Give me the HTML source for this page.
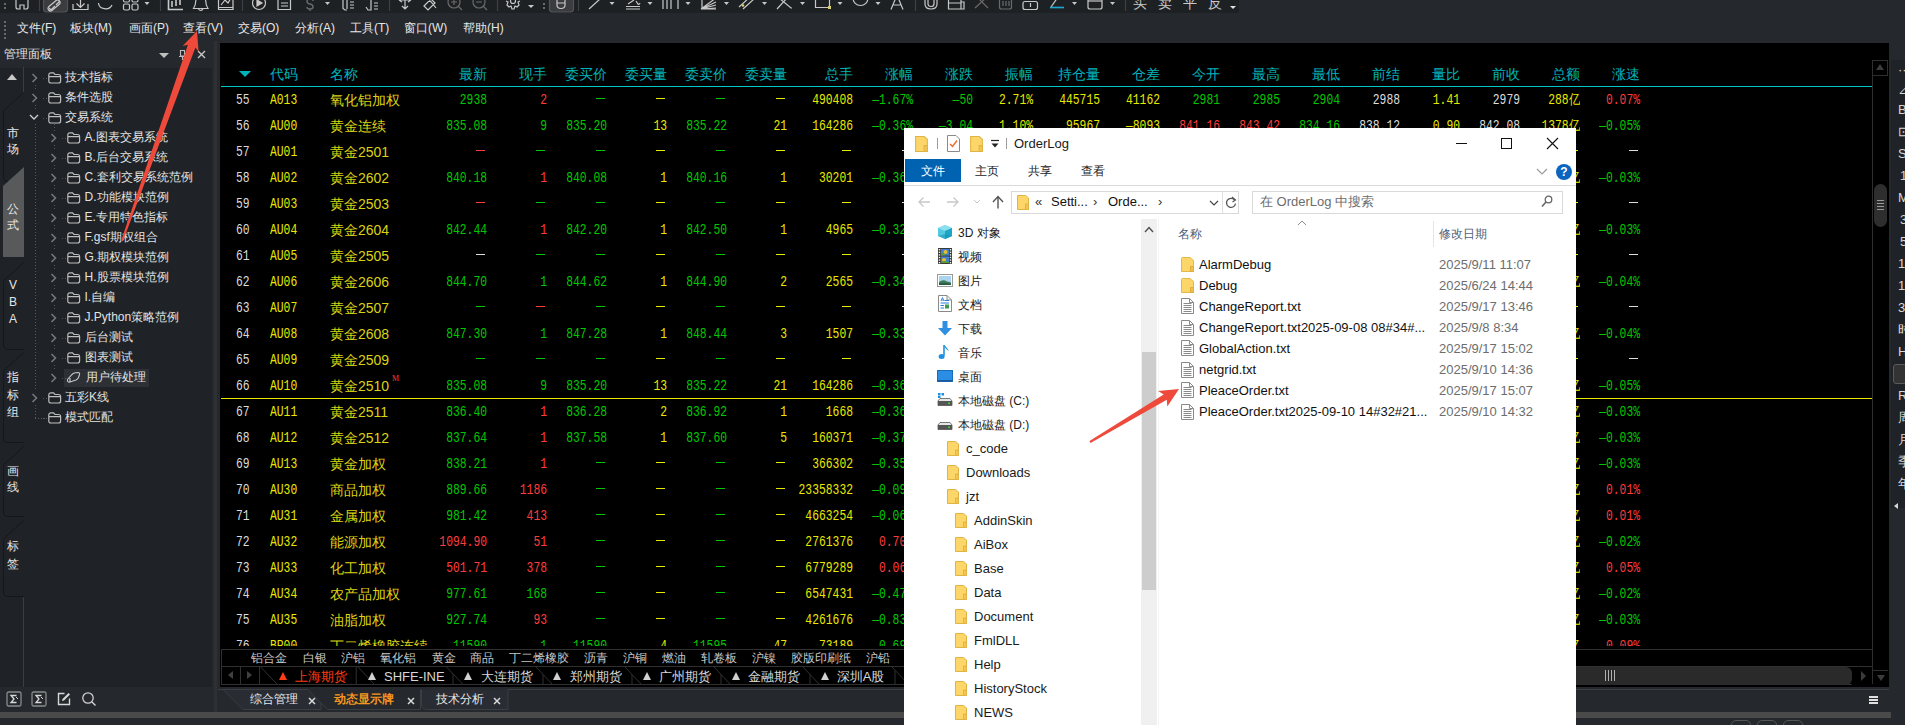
<!DOCTYPE html><html><head><meta charset="utf-8"><style>
*{margin:0;padding:0;box-sizing:border-box}
body{width:1905px;height:725px;overflow:hidden;background:#25282c;font-family:"Liberation Sans",sans-serif;position:relative}
.a{position:absolute}
.t{position:absolute;white-space:nowrap}
.num{position:absolute;white-space:nowrap;font-family:"Liberation Mono",monospace;font-size:14px;line-height:26px;transform:scaleX(0.81);transform-origin:100% 50%;text-align:right}
.hd{position:absolute;white-space:nowrap;font-size:13.5px;line-height:20px;color:#00b4bc;text-align:right}
.dash{position:absolute;height:1px}
svg{overflow:visible}
</style></head><body>
<div class="a" style="left:0;top:0;width:1239px;height:13px;background:#1e2124;border-radius:0 0 3px 0"></div><svg class="a" style="left:0;top:0;overflow:hidden" width="1239" height="13" viewBox="0 0 1239 13" fill="none" stroke="#c8c8c8" stroke-width="1.2"><rect x="4" y="3" width="2" height="2" fill="#6a6a6a" stroke="none"/><rect x="4" y="7" width="2" height="2" fill="#6a6a6a" stroke="none"/><path d="M16 -2 V7 Q16 9 18 9 H20 V5 H24 V9 H26 Q28 9 28 7 V-2"/><path d="M39.5 0 V11" stroke="#3c3f43"/><path d="M160.5 0 V11" stroke="#3c3f43"/><path d="M242.5 0 V11" stroke="#3c3f43"/><path d="M389.5 0 V11" stroke="#3c3f43"/><path d="M497.5 0 V11" stroke="#3c3f43"/><path d="M915.5 0 V11" stroke="#3c3f43"/><path d="M1125.5 0 V11" stroke="#3c3f43"/><rect x="43.5" y="-4" width="24" height="16" rx="3" fill="#3a3c40" stroke="#505357"/><path d="M49 8 L51 10 L55 6 M56 5 L60 1" stroke-width="1.3"/><rect x="47" y="3" width="14" height="5" rx="2.5" transform="rotate(-40 54 5.5)"/><path d="M73 4 V9.5 H88 V4 M80.5 -3 V7 M76.5 3.5 L80.5 7.5 L84.5 3.5"/><path d="M98.5 3 A7 6 0 0 0 112 5 M108 -1 L112 -0.5"/><rect x="123.5" y="-4" width="6" height="6" rx="1.5"/><rect x="132" y="-4" width="6" height="6" rx="1.5"/><rect x="123.5" y="4" width="6" height="6" rx="1.5"/><rect x="132" y="4" width="6" height="6" rx="1.5"/><path d="M144.5 2 H149.5 L147 5 Z" fill="#c8c8c8" stroke="none"/><path d="M325.0 2 H330.0 L327.5 5 Z" fill="#c8c8c8" stroke="none"/><path d="M609.5 2 H614.5 L612 5 Z" fill="#c8c8c8" stroke="none"/><path d="M647.5 2 H652.5 L650 5 Z" fill="#c8c8c8" stroke="none"/><path d="M685.5 2 H690.5 L688 5 Z" fill="#c8c8c8" stroke="none"/><path d="M724.0 2 H729.0 L726.5 5 Z" fill="#c8c8c8" stroke="none"/><path d="M762.0 2 H767.0 L764.5 5 Z" fill="#c8c8c8" stroke="none"/><path d="M800.0 2 H805.0 L802.5 5 Z" fill="#c8c8c8" stroke="none"/><path d="M837.5 2 H842.5 L840 5 Z" fill="#c8c8c8" stroke="none"/><path d="M875.5 2 H880.5 L878 5 Z" fill="#c8c8c8" stroke="none"/><path d="M1072.0 2 H1077.0 L1074.5 5 Z" fill="#c8c8c8" stroke="none"/><path d="M1110.0 2 H1115.0 L1112.5 5 Z" fill="#c8c8c8" stroke="none"/><path d="M168.5 -3 V9.5 H183 M172 1 V7 M176 -2 V6 M180 0 V5" stroke-width="1.6"/><path d="M196 -2 Q196 5 193.5 8.5 H208 Q205.5 5 205.5 -2 M198.5 9 Q200.5 12 203 9"/><path d="M218.5 -3 V9.5 H233 V-3 M218.5 7.5 H233 M221 5 L225 0 L228 3 L231 -2"/><circle cx="259" cy="3" r="6.5"/><path d="M257 0 L262 3 L257 6 Z" fill="#c8c8c8"/><path d="M278 -3 V9.5 H290.5 V-3 M281 3 H288 M281 6 H288"/><path d="M313 1 Q313 -1 310 -1 Q307 -1 307 1.5 Q307 3.5 310 4 Q313 4.5 313 7 Q313 9 310 9 Q307 9 307 7 M310 9 V11" stroke="#6a6a6a" stroke-width="1.4"/><path d="M343 -3 V8.5 L345 10 H347 M347 -2 V9 M350 2 H354 M350 5 H354 M350 8 H354"/><path d="M366 7 L368 10 H371 V-3 M374 3 H378 M374 6 H378 M374 9 H378"/><path d="M399 0 L402 -2 M399 0 L402 2 M411 0 L408 -2 M411 0 L408 2 M399 0 H411 M405 -3 V9 M402 6 L405 9 L408 6"/><path d="M424 6 L431 -1 L435 3 L428 10 Z M428 -2 L436 8"/><circle cx="454" cy="2" r="6" stroke="#6a6a6a"/><path d="M458.5 6.5 L462 10 M451 2 H457 M454 -1 V5" stroke="#6a6a6a"/><circle cx="479" cy="2" r="6" stroke="#6a6a6a"/><path d="M483.5 6.5 L487 10 M476 2 H482" stroke="#6a6a6a"/><path d="M506 1 L508 2 L507 5 L509 7 L511 6 L512 9 H514 L515 6 L517 7 L519 5 L518 2 L520 1"/><circle cx="513" cy="1" r="2.5"/><path d="M528 5 H534 L531 8 Z" fill="#c8c8c8" stroke="none"/><rect x="543" y="3" width="2" height="2" fill="#6a6a6a" stroke="none"/><rect x="543" y="7" width="2" height="2" fill="#6a6a6a" stroke="none"/><rect x="549.5" y="-4" width="24" height="16" rx="3" fill="#3a3c40" stroke="#505357"/><path d="M557 -3 V5 Q557 8.5 561 8.5 Q565 8.5 565 5 V-3 M557 3 H565"/><path d="M578.5 0 V11" stroke="#3c3f43"/><path d="M589 9 L600 -1"/><path d="M626 6.5 H640 M626 9 H640 M628 4 L634 0 M636 1 L638 4 Q639 5 640 3"/><path d="M663 -3 V9 M667 -3 V9 M671 -3 V9 M678 -3 V9"/><path d="M701 9 L716 -2 M701 9 L716 2 M701 9 L716 5 M701 9 L716 8 M701 9 H716 M702 -2 V9"/><path d="M739 7 L750 -3 M743 9 L754 -1" /><circle cx="743" cy="5.5" r="1.3" fill="#d6d06a" stroke="none"/><path d="M777 9 L788 -3 M779 -2 L791 8 H792"/><path d="M815.5 -3 V7.5 H829.5 V-3"/><rect x="828" y="6" width="3" height="3" fill="#d6d06a" stroke="none"/><path d="M853 -2 A7.5 7.5 0 0 0 868 -2"/><path d="M891 9.5 L897 -5 L903 9.5 M893.5 5 H900.5"/><path d="M925 -2 V4 Q925 9 931 9 Q937 9 937 4 V-2 M928 -2 V4 Q928 6.5 931 6.5 Q934 6.5 934 4 V-2"/><path d="M948.5 -3 V9 H961 V-3 M948.5 3 H961 M961 2 H964 V9 H961"/><path d="M975 8 L987 -3 M977 -3 L988 8" stroke="#6a6a6a"/><rect x="999.5" y="-3" width="12" height="12" rx="2" stroke="#6a6a6a"/><path d="M1003 1 V6 M1006 1 V6 M1009 1 V6" stroke="#6a6a6a"/><rect x="1023" y="1.5" width="14.5" height="8" rx="2"/><path d="M1030.5 3 V7"/><path d="M1051 -3 L1058 -3 L1051 7" /><path d="M1050 7.5 H1064" stroke="#1ea8d0" stroke-width="1.6"/><rect x="1088" y="-3" width="14" height="12" rx="2"/><path d="M1088 1 H1102"/></svg><div class="a" style="left:1133px;top:0;width:16px;height:13px;overflow:hidden"><div class="t" style="left:0;top:-6px;font-size:14px;line-height:18px;color:#c8c8c8">买</div></div><div class="a" style="left:1158px;top:0;width:16px;height:13px;overflow:hidden"><div class="t" style="left:0;top:-6px;font-size:14px;line-height:18px;color:#c8c8c8">卖</div></div><div class="a" style="left:1183px;top:0;width:16px;height:13px;overflow:hidden"><div class="t" style="left:0;top:-6px;font-size:14px;line-height:18px;color:#c8c8c8">平</div></div><div class="a" style="left:1208px;top:0;width:16px;height:13px;overflow:hidden"><div class="t" style="left:0;top:-6px;font-size:14px;line-height:18px;color:#c8c8c8">反</div></div><div class="a" style="left:1230px;top:6px;width:0;height:0;border-left:3px solid transparent;border-right:3px solid transparent;border-top:3px solid #e0e0e0"></div><div class="t" style="left:17px;top:19px;font-size:12px;line-height:18px;color:#e6e6e6">文件(F)</div><div class="t" style="left:70px;top:19px;font-size:12px;line-height:18px;color:#e6e6e6">板块(M)</div><div class="t" style="left:129px;top:19px;font-size:12px;line-height:18px;color:#e6e6e6">画面(P)</div><div class="t" style="left:183px;top:19px;font-size:12px;line-height:18px;color:#e6e6e6">查看(V)</div><div class="t" style="left:238px;top:19px;font-size:12px;line-height:18px;color:#e6e6e6">交易(O)</div><div class="t" style="left:295px;top:19px;font-size:12px;line-height:18px;color:#e6e6e6">分析(A)</div><div class="t" style="left:350px;top:19px;font-size:12px;line-height:18px;color:#e6e6e6">工具(T)</div><div class="t" style="left:404px;top:19px;font-size:12px;line-height:18px;color:#e6e6e6">窗口(W)</div><div class="t" style="left:463px;top:19px;font-size:12px;line-height:18px;color:#e6e6e6">帮助(H)</div><div class="a" style="left:4px;top:21px;width:2px;height:2px;background:#6a6a6a"></div><div class="a" style="left:4px;top:25px;width:2px;height:2px;background:#6a6a6a"></div><div class="a" style="left:4px;top:29px;width:2px;height:2px;background:#6a6a6a"></div><div class="a" style="left:4px;top:33px;width:2px;height:2px;background:#6a6a6a"></div><div class="a" style="left:4px;top:37px;width:2px;height:2px;background:#6a6a6a"></div><div class="a" style="left:0;top:68px;width:212px;height:619px;background:#1f2226"></div><div class="t" style="left:4px;top:45px;font-size:12px;line-height:18px;color:#e0e0e0">管理面板</div><div class="a" style="left:159px;top:53px;width:0;height:0;border-left:5px solid transparent;border-right:5px solid transparent;border-top:5px solid #c0c0c0"></div><svg class="a" style="left:178px;top:49px" width="9" height="12" viewBox="0 0 9 12"><path d="M2.5 1.5 H6.5 V7 H2.5 Z M1 7.5 H8 M4.5 8 V11" fill="none" stroke="#bdbdbd" stroke-width="1.1"/></svg><svg class="a" style="left:197px;top:50px" width="9" height="9" viewBox="0 0 9 9"><path d="M1 1 L8 8 M8 1 L1 8" stroke="#c8c8c8" stroke-width="1.4"/></svg><div class="a" style="left:7px;top:74px;width:0;height:0;border-left:5px solid transparent;border-right:5px solid transparent;border-bottom:6px solid #c8c8c8"></div><div class="a" style="left:23px;top:67px;width:1px;height:25px;background:#3a3d41"></div><svg class="a" style="left:0;top:92px" width="26" height="90" viewBox="0 0 26 90"><path d="M23.5 0.5 L3.5 19 V85 Q3.5 89.5 8 89.5 H24" fill="none" stroke="#15171a" stroke-width="1"/></svg><div class="t" style="left:4px;width:18px;text-align:center;top:124px;line-height:18px;font-size:12px;color:#e6e6e6">市</div><div class="t" style="left:4px;width:18px;text-align:center;top:140px;line-height:18px;font-size:12px;color:#e6e6e6">场</div><svg class="a" style="left:0;top:167px" width="26" height="90" viewBox="0 0 26 90"><path d="M3 19 L24 0 V90 H3 Z" fill="#58595b"/></svg><div class="t" style="left:4px;width:18px;text-align:center;top:200px;line-height:18px;font-size:12px;color:#e6e6e6">公</div><div class="t" style="left:4px;width:18px;text-align:center;top:216px;line-height:18px;font-size:12px;color:#e6e6e6">式</div><svg class="a" style="left:0;top:262px" width="26" height="88" viewBox="0 0 26 88"><path d="M23.5 0.5 L3.5 19 V83 Q3.5 87.5 8 87.5 H24" fill="none" stroke="#15171a" stroke-width="1"/></svg><div class="t" style="left:4px;width:18px;text-align:center;top:276px;line-height:18px;font-size:12px;color:#e6e6e6">V</div><div class="t" style="left:4px;width:18px;text-align:center;top:293px;line-height:18px;font-size:12px;color:#e6e6e6">B</div><div class="t" style="left:4px;width:18px;text-align:center;top:310px;line-height:18px;font-size:12px;color:#e6e6e6">A</div><svg class="a" style="left:0;top:352px" width="26" height="91" viewBox="0 0 26 91"><path d="M23.5 0.5 L3.5 19 V86 Q3.5 90.5 8 90.5 H24" fill="none" stroke="#15171a" stroke-width="1"/></svg><div class="t" style="left:4px;width:18px;text-align:center;top:368px;line-height:18px;font-size:12px;color:#e6e6e6">指</div><div class="t" style="left:4px;width:18px;text-align:center;top:386px;line-height:18px;font-size:12px;color:#e6e6e6">标</div><div class="t" style="left:4px;width:18px;text-align:center;top:403px;line-height:18px;font-size:12px;color:#e6e6e6">组</div><svg class="a" style="left:0;top:446px" width="26" height="71" viewBox="0 0 26 71"><path d="M23.5 0.5 L3.5 19 V66 Q3.5 70.5 8 70.5 H24" fill="none" stroke="#15171a" stroke-width="1"/></svg><div class="t" style="left:4px;width:18px;text-align:center;top:462px;line-height:18px;font-size:12px;color:#e6e6e6">画</div><div class="t" style="left:4px;width:18px;text-align:center;top:478px;line-height:18px;font-size:12px;color:#e6e6e6">线</div><svg class="a" style="left:0;top:520px" width="26" height="77" viewBox="0 0 26 77"><path d="M23.5 0.5 L3.5 19 V72 Q3.5 76.5 8 76.5 H24" fill="none" stroke="#15171a" stroke-width="1"/></svg><div class="t" style="left:4px;width:18px;text-align:center;top:537px;line-height:18px;font-size:12px;color:#e6e6e6">标</div><div class="t" style="left:4px;width:18px;text-align:center;top:555px;line-height:18px;font-size:12px;color:#e6e6e6">签</div><div class="a" style="left:23px;top:597px;width:1px;height:90px;background:#3a3d41"></div><div class="a" style="left:35px;top:124px;width:1px;height:265px;background:repeating-linear-gradient(to bottom,#5a5a5a 0 1px,transparent 1px 3px)"></div><div class="a" style="left:35px;top:405px;width:1px;height:14px;background:repeating-linear-gradient(to bottom,#5a5a5a 0 1px,transparent 1px 3px)"></div><div class="a" style="left:35px;top:418px;width:12px;height:1px;background:repeating-linear-gradient(to right,#5a5a5a 0 1px,transparent 1px 3px)"></div><div class="a" style="left:35px;top:85px;width:1px;height:6px;background:repeating-linear-gradient(to bottom,#5a5a5a 0 1px,transparent 1px 3px)"></div><div class="a" style="left:35px;top:105px;width:1px;height:6px;background:repeating-linear-gradient(to bottom,#5a5a5a 0 1px,transparent 1px 3px)"></div><div class="a" style="left:54px;top:145px;width:1px;height:6px;background:repeating-linear-gradient(to bottom,#5a5a5a 0 1px,transparent 1px 3px)"></div><div class="a" style="left:54px;top:165px;width:1px;height:6px;background:repeating-linear-gradient(to bottom,#5a5a5a 0 1px,transparent 1px 3px)"></div><div class="a" style="left:54px;top:185px;width:1px;height:6px;background:repeating-linear-gradient(to bottom,#5a5a5a 0 1px,transparent 1px 3px)"></div><div class="a" style="left:54px;top:205px;width:1px;height:6px;background:repeating-linear-gradient(to bottom,#5a5a5a 0 1px,transparent 1px 3px)"></div><div class="a" style="left:54px;top:225px;width:1px;height:6px;background:repeating-linear-gradient(to bottom,#5a5a5a 0 1px,transparent 1px 3px)"></div><div class="a" style="left:54px;top:245px;width:1px;height:6px;background:repeating-linear-gradient(to bottom,#5a5a5a 0 1px,transparent 1px 3px)"></div><div class="a" style="left:54px;top:265px;width:1px;height:6px;background:repeating-linear-gradient(to bottom,#5a5a5a 0 1px,transparent 1px 3px)"></div><div class="a" style="left:54px;top:285px;width:1px;height:6px;background:repeating-linear-gradient(to bottom,#5a5a5a 0 1px,transparent 1px 3px)"></div><div class="a" style="left:54px;top:305px;width:1px;height:6px;background:repeating-linear-gradient(to bottom,#5a5a5a 0 1px,transparent 1px 3px)"></div><div class="a" style="left:54px;top:325px;width:1px;height:6px;background:repeating-linear-gradient(to bottom,#5a5a5a 0 1px,transparent 1px 3px)"></div><div class="a" style="left:54px;top:345px;width:1px;height:6px;background:repeating-linear-gradient(to bottom,#5a5a5a 0 1px,transparent 1px 3px)"></div><div class="a" style="left:54px;top:365px;width:1px;height:6px;background:repeating-linear-gradient(to bottom,#5a5a5a 0 1px,transparent 1px 3px)"></div><div class="a" style="left:54px;top:124px;width:1px;height:7px;background:repeating-linear-gradient(to bottom,#5a5a5a 0 1px,transparent 1px 3px)"></div><svg class="a" style="left:31px;top:73px" width="8" height="10" viewBox="0 0 8 10"><path d="M1.5 1 L5.5 5 L1.5 9" fill="none" stroke="#777" stroke-width="1.6"/></svg><div class="a" style="left:43px;top:78px;width:4px;height:1px;background:repeating-linear-gradient(to right,#5a5a5a 0 1px,transparent 1px 3px)"></div><svg class="a" style="left:48px;top:72px" width="14" height="12" viewBox="0 0 14 12"><path d="M0.8 9 V3 Q0.8 0.8 3 0.8 H5.5 L7 2.5 H10.5 Q12.6 2.5 12.6 4.5 V9 Q12.6 11 10.5 11 H3 Q0.8 11 0.8 9 Z M0.8 4.6 H12.6" fill="none" stroke="#bdbdbd" stroke-width="1.2"/></svg><div class="t" style="left:65px;top:68px;line-height:18px;font-size:12px;color:#e2e2e2">技术指标</div><svg class="a" style="left:31px;top:93px" width="8" height="10" viewBox="0 0 8 10"><path d="M1.5 1 L5.5 5 L1.5 9" fill="none" stroke="#777" stroke-width="1.6"/></svg><div class="a" style="left:43px;top:98px;width:4px;height:1px;background:repeating-linear-gradient(to right,#5a5a5a 0 1px,transparent 1px 3px)"></div><svg class="a" style="left:48px;top:92px" width="14" height="12" viewBox="0 0 14 12"><path d="M0.8 9 V3 Q0.8 0.8 3 0.8 H5.5 L7 2.5 H10.5 Q12.6 2.5 12.6 4.5 V9 Q12.6 11 10.5 11 H3 Q0.8 11 0.8 9 Z M0.8 4.6 H12.6" fill="none" stroke="#bdbdbd" stroke-width="1.2"/></svg><div class="t" style="left:65px;top:88px;line-height:18px;font-size:12px;color:#e2e2e2">条件选股</div><svg class="a" style="left:29px;top:113px" width="10" height="8" viewBox="0 0 10 8"><path d="M1 2 L5 6 L9 2" fill="none" stroke="#d0d0d0" stroke-width="1.3"/></svg><div class="a" style="left:43px;top:118px;width:4px;height:1px;background:repeating-linear-gradient(to right,#5a5a5a 0 1px,transparent 1px 3px)"></div><svg class="a" style="left:48px;top:112px" width="14" height="12" viewBox="0 0 14 12"><path d="M0.8 9 V3 Q0.8 0.8 3 0.8 H5.5 L7 2.5 H10.5 Q12.6 2.5 12.6 4.5 V9 Q12.6 11 10.5 11 H3 Q0.8 11 0.8 9 Z M0.8 4.6 H12.6" fill="none" stroke="#bdbdbd" stroke-width="1.2"/></svg><div class="t" style="left:65px;top:108px;line-height:18px;font-size:12px;color:#e2e2e2">交易系统</div><svg class="a" style="left:50px;top:133px" width="8" height="10" viewBox="0 0 8 10"><path d="M1.5 1 L5.5 5 L1.5 9" fill="none" stroke="#777" stroke-width="1.6"/></svg><div class="a" style="left:62px;top:138px;width:4px;height:1px;background:repeating-linear-gradient(to right,#5a5a5a 0 1px,transparent 1px 3px)"></div><svg class="a" style="left:67px;top:132px" width="14" height="12" viewBox="0 0 14 12"><path d="M0.8 9 V3 Q0.8 0.8 3 0.8 H5.5 L7 2.5 H10.5 Q12.6 2.5 12.6 4.5 V9 Q12.6 11 10.5 11 H3 Q0.8 11 0.8 9 Z M0.8 4.6 H12.6" fill="none" stroke="#bdbdbd" stroke-width="1.2"/></svg><div class="t" style="left:84.5px;top:128px;line-height:18px;font-size:12px;color:#e2e2e2">A.图表交易系统</div><svg class="a" style="left:50px;top:153px" width="8" height="10" viewBox="0 0 8 10"><path d="M1.5 1 L5.5 5 L1.5 9" fill="none" stroke="#777" stroke-width="1.6"/></svg><div class="a" style="left:62px;top:158px;width:4px;height:1px;background:repeating-linear-gradient(to right,#5a5a5a 0 1px,transparent 1px 3px)"></div><svg class="a" style="left:67px;top:152px" width="14" height="12" viewBox="0 0 14 12"><path d="M0.8 9 V3 Q0.8 0.8 3 0.8 H5.5 L7 2.5 H10.5 Q12.6 2.5 12.6 4.5 V9 Q12.6 11 10.5 11 H3 Q0.8 11 0.8 9 Z M0.8 4.6 H12.6" fill="none" stroke="#bdbdbd" stroke-width="1.2"/></svg><div class="t" style="left:84.5px;top:148px;line-height:18px;font-size:12px;color:#e2e2e2">B.后台交易系统</div><svg class="a" style="left:50px;top:173px" width="8" height="10" viewBox="0 0 8 10"><path d="M1.5 1 L5.5 5 L1.5 9" fill="none" stroke="#777" stroke-width="1.6"/></svg><div class="a" style="left:62px;top:178px;width:4px;height:1px;background:repeating-linear-gradient(to right,#5a5a5a 0 1px,transparent 1px 3px)"></div><svg class="a" style="left:67px;top:172px" width="14" height="12" viewBox="0 0 14 12"><path d="M0.8 9 V3 Q0.8 0.8 3 0.8 H5.5 L7 2.5 H10.5 Q12.6 2.5 12.6 4.5 V9 Q12.6 11 10.5 11 H3 Q0.8 11 0.8 9 Z M0.8 4.6 H12.6" fill="none" stroke="#bdbdbd" stroke-width="1.2"/></svg><div class="t" style="left:84.5px;top:168px;line-height:18px;font-size:12px;color:#e2e2e2">C.套利交易系统范例</div><svg class="a" style="left:50px;top:193px" width="8" height="10" viewBox="0 0 8 10"><path d="M1.5 1 L5.5 5 L1.5 9" fill="none" stroke="#777" stroke-width="1.6"/></svg><div class="a" style="left:62px;top:198px;width:4px;height:1px;background:repeating-linear-gradient(to right,#5a5a5a 0 1px,transparent 1px 3px)"></div><svg class="a" style="left:67px;top:192px" width="14" height="12" viewBox="0 0 14 12"><path d="M0.8 9 V3 Q0.8 0.8 3 0.8 H5.5 L7 2.5 H10.5 Q12.6 2.5 12.6 4.5 V9 Q12.6 11 10.5 11 H3 Q0.8 11 0.8 9 Z M0.8 4.6 H12.6" fill="none" stroke="#bdbdbd" stroke-width="1.2"/></svg><div class="t" style="left:84.5px;top:188px;line-height:18px;font-size:12px;color:#e2e2e2">D.功能模块范例</div><svg class="a" style="left:50px;top:213px" width="8" height="10" viewBox="0 0 8 10"><path d="M1.5 1 L5.5 5 L1.5 9" fill="none" stroke="#777" stroke-width="1.6"/></svg><div class="a" style="left:62px;top:218px;width:4px;height:1px;background:repeating-linear-gradient(to right,#5a5a5a 0 1px,transparent 1px 3px)"></div><svg class="a" style="left:67px;top:212px" width="14" height="12" viewBox="0 0 14 12"><path d="M0.8 9 V3 Q0.8 0.8 3 0.8 H5.5 L7 2.5 H10.5 Q12.6 2.5 12.6 4.5 V9 Q12.6 11 10.5 11 H3 Q0.8 11 0.8 9 Z M0.8 4.6 H12.6" fill="none" stroke="#bdbdbd" stroke-width="1.2"/></svg><div class="t" style="left:84.5px;top:208px;line-height:18px;font-size:12px;color:#e2e2e2">E.专用特色指标</div><svg class="a" style="left:50px;top:233px" width="8" height="10" viewBox="0 0 8 10"><path d="M1.5 1 L5.5 5 L1.5 9" fill="none" stroke="#777" stroke-width="1.6"/></svg><div class="a" style="left:62px;top:238px;width:4px;height:1px;background:repeating-linear-gradient(to right,#5a5a5a 0 1px,transparent 1px 3px)"></div><svg class="a" style="left:67px;top:232px" width="14" height="12" viewBox="0 0 14 12"><path d="M0.8 9 V3 Q0.8 0.8 3 0.8 H5.5 L7 2.5 H10.5 Q12.6 2.5 12.6 4.5 V9 Q12.6 11 10.5 11 H3 Q0.8 11 0.8 9 Z M0.8 4.6 H12.6" fill="none" stroke="#bdbdbd" stroke-width="1.2"/></svg><div class="t" style="left:84.5px;top:228px;line-height:18px;font-size:12px;color:#e2e2e2">F.gsf期权组合</div><svg class="a" style="left:50px;top:253px" width="8" height="10" viewBox="0 0 8 10"><path d="M1.5 1 L5.5 5 L1.5 9" fill="none" stroke="#777" stroke-width="1.6"/></svg><div class="a" style="left:62px;top:258px;width:4px;height:1px;background:repeating-linear-gradient(to right,#5a5a5a 0 1px,transparent 1px 3px)"></div><svg class="a" style="left:67px;top:252px" width="14" height="12" viewBox="0 0 14 12"><path d="M0.8 9 V3 Q0.8 0.8 3 0.8 H5.5 L7 2.5 H10.5 Q12.6 2.5 12.6 4.5 V9 Q12.6 11 10.5 11 H3 Q0.8 11 0.8 9 Z M0.8 4.6 H12.6" fill="none" stroke="#bdbdbd" stroke-width="1.2"/></svg><div class="t" style="left:84.5px;top:248px;line-height:18px;font-size:12px;color:#e2e2e2">G.期权模块范例</div><svg class="a" style="left:50px;top:273px" width="8" height="10" viewBox="0 0 8 10"><path d="M1.5 1 L5.5 5 L1.5 9" fill="none" stroke="#777" stroke-width="1.6"/></svg><div class="a" style="left:62px;top:278px;width:4px;height:1px;background:repeating-linear-gradient(to right,#5a5a5a 0 1px,transparent 1px 3px)"></div><svg class="a" style="left:67px;top:272px" width="14" height="12" viewBox="0 0 14 12"><path d="M0.8 9 V3 Q0.8 0.8 3 0.8 H5.5 L7 2.5 H10.5 Q12.6 2.5 12.6 4.5 V9 Q12.6 11 10.5 11 H3 Q0.8 11 0.8 9 Z M0.8 4.6 H12.6" fill="none" stroke="#bdbdbd" stroke-width="1.2"/></svg><div class="t" style="left:84.5px;top:268px;line-height:18px;font-size:12px;color:#e2e2e2">H.股票模块范例</div><svg class="a" style="left:50px;top:293px" width="8" height="10" viewBox="0 0 8 10"><path d="M1.5 1 L5.5 5 L1.5 9" fill="none" stroke="#777" stroke-width="1.6"/></svg><div class="a" style="left:62px;top:298px;width:4px;height:1px;background:repeating-linear-gradient(to right,#5a5a5a 0 1px,transparent 1px 3px)"></div><svg class="a" style="left:67px;top:292px" width="14" height="12" viewBox="0 0 14 12"><path d="M0.8 9 V3 Q0.8 0.8 3 0.8 H5.5 L7 2.5 H10.5 Q12.6 2.5 12.6 4.5 V9 Q12.6 11 10.5 11 H3 Q0.8 11 0.8 9 Z M0.8 4.6 H12.6" fill="none" stroke="#bdbdbd" stroke-width="1.2"/></svg><div class="t" style="left:84.5px;top:288px;line-height:18px;font-size:12px;color:#e2e2e2">I.自编</div><svg class="a" style="left:50px;top:313px" width="8" height="10" viewBox="0 0 8 10"><path d="M1.5 1 L5.5 5 L1.5 9" fill="none" stroke="#777" stroke-width="1.6"/></svg><div class="a" style="left:62px;top:318px;width:4px;height:1px;background:repeating-linear-gradient(to right,#5a5a5a 0 1px,transparent 1px 3px)"></div><svg class="a" style="left:67px;top:312px" width="14" height="12" viewBox="0 0 14 12"><path d="M0.8 9 V3 Q0.8 0.8 3 0.8 H5.5 L7 2.5 H10.5 Q12.6 2.5 12.6 4.5 V9 Q12.6 11 10.5 11 H3 Q0.8 11 0.8 9 Z M0.8 4.6 H12.6" fill="none" stroke="#bdbdbd" stroke-width="1.2"/></svg><div class="t" style="left:84.5px;top:308px;line-height:18px;font-size:12px;color:#e2e2e2">J.Python策略范例</div><svg class="a" style="left:50px;top:333px" width="8" height="10" viewBox="0 0 8 10"><path d="M1.5 1 L5.5 5 L1.5 9" fill="none" stroke="#777" stroke-width="1.6"/></svg><div class="a" style="left:62px;top:338px;width:4px;height:1px;background:repeating-linear-gradient(to right,#5a5a5a 0 1px,transparent 1px 3px)"></div><svg class="a" style="left:67px;top:332px" width="14" height="12" viewBox="0 0 14 12"><path d="M0.8 9 V3 Q0.8 0.8 3 0.8 H5.5 L7 2.5 H10.5 Q12.6 2.5 12.6 4.5 V9 Q12.6 11 10.5 11 H3 Q0.8 11 0.8 9 Z M0.8 4.6 H12.6" fill="none" stroke="#bdbdbd" stroke-width="1.2"/></svg><div class="t" style="left:84.5px;top:328px;line-height:18px;font-size:12px;color:#e2e2e2">后台测试</div><svg class="a" style="left:50px;top:353px" width="8" height="10" viewBox="0 0 8 10"><path d="M1.5 1 L5.5 5 L1.5 9" fill="none" stroke="#777" stroke-width="1.6"/></svg><div class="a" style="left:62px;top:358px;width:4px;height:1px;background:repeating-linear-gradient(to right,#5a5a5a 0 1px,transparent 1px 3px)"></div><svg class="a" style="left:67px;top:352px" width="14" height="12" viewBox="0 0 14 12"><path d="M0.8 9 V3 Q0.8 0.8 3 0.8 H5.5 L7 2.5 H10.5 Q12.6 2.5 12.6 4.5 V9 Q12.6 11 10.5 11 H3 Q0.8 11 0.8 9 Z M0.8 4.6 H12.6" fill="none" stroke="#bdbdbd" stroke-width="1.2"/></svg><div class="t" style="left:84.5px;top:348px;line-height:18px;font-size:12px;color:#e2e2e2">图表测试</div><div class="a" style="left:64px;top:369px;width:85px;height:18px;background:#2d3034"></div><svg class="a" style="left:50px;top:373px" width="8" height="10" viewBox="0 0 8 10"><path d="M1.5 1 L5.5 5 L1.5 9" fill="none" stroke="#777" stroke-width="1.6"/></svg><div class="a" style="left:62px;top:378px;width:4px;height:1px;background:repeating-linear-gradient(to right,#5a5a5a 0 1px,transparent 1px 3px)"></div><svg class="a" style="left:66px;top:371px" width="15" height="12" viewBox="0 0 15 12"><path d="M1.5 8.5 L6 3.5 Q7.5 2 9.5 1.8 L12 1.5 Q14 1.5 13.5 3.5 L12.5 6.5 Q12 8 10 9 L4 11 Q1.5 11.5 1.5 9.5 Z M4 11 V7" fill="none" stroke="#c8c8c8" stroke-width="1.1"/></svg><div class="t" style="left:86px;top:368px;line-height:18px;font-size:12px;color:#e2e2e2">用户待处理</div><svg class="a" style="left:31px;top:393px" width="8" height="10" viewBox="0 0 8 10"><path d="M1.5 1 L5.5 5 L1.5 9" fill="none" stroke="#777" stroke-width="1.6"/></svg><div class="a" style="left:43px;top:398px;width:4px;height:1px;background:repeating-linear-gradient(to right,#5a5a5a 0 1px,transparent 1px 3px)"></div><svg class="a" style="left:48px;top:392px" width="14" height="12" viewBox="0 0 14 12"><path d="M0.8 9 V3 Q0.8 0.8 3 0.8 H5.5 L7 2.5 H10.5 Q12.6 2.5 12.6 4.5 V9 Q12.6 11 10.5 11 H3 Q0.8 11 0.8 9 Z M0.8 4.6 H12.6" fill="none" stroke="#bdbdbd" stroke-width="1.2"/></svg><div class="t" style="left:65px;top:388px;line-height:18px;font-size:12px;color:#e2e2e2">五彩K线</div><div class="a" style="left:43px;top:418px;width:4px;height:1px;background:repeating-linear-gradient(to right,#5a5a5a 0 1px,transparent 1px 3px)"></div><svg class="a" style="left:48px;top:412px" width="14" height="12" viewBox="0 0 14 12"><path d="M0.8 9 V3 Q0.8 0.8 3 0.8 H5.5 L7 2.5 H10.5 Q12.6 2.5 12.6 4.5 V9 Q12.6 11 10.5 11 H3 Q0.8 11 0.8 9 Z M0.8 4.6 H12.6" fill="none" stroke="#bdbdbd" stroke-width="1.2"/></svg><div class="t" style="left:65px;top:408px;line-height:18px;font-size:12px;color:#e2e2e2">模式匹配</div><svg class="a" style="left:6px;top:691px" width="16" height="16" viewBox="0 0 16 16"><rect x="1" y="1" width="14" height="14" fill="none" stroke="#8a8a8a" stroke-width="1.3" rx="1.5"/><path d="M10.5 4.5 H5 L8 8 L5 11.5 H10.5" fill="none" stroke="#d8d8d8" stroke-width="1.3"/><path d="M10 6 L12 8" stroke="#d8d8d8" stroke-width="1"/></svg><svg class="a" style="left:31px;top:691px" width="16" height="16" viewBox="0 0 16 16"><rect x="1" y="1" width="14" height="14" fill="none" stroke="#8a8a8a" stroke-width="1.3" rx="1.5"/><path d="M10.5 4.5 H5 L8 8 L5 11.5 H10.5" fill="none" stroke="#d8d8d8" stroke-width="1.3"/><path d="M10 6 L12 8" stroke="#d8d8d8" stroke-width="1"/></svg><svg class="a" style="left:56px;top:691px" width="16" height="16" viewBox="0 0 16 16"><path d="M8.5 2.5 H2.5 V13.5 H13.5 V7.5" fill="none" stroke="#d8d8d8" stroke-width="1.4"/><path d="M6 10 L6.5 8 L12.5 2 L14 3.5 L8 9.5 Z" fill="#d8d8d8"/></svg><svg class="a" style="left:81px;top:691px" width="16" height="16" viewBox="0 0 16 16"><circle cx="7" cy="7" r="5.2" fill="none" stroke="#d0d0d0" stroke-width="1.3"/><path d="M11 11 L14.5 14.5" stroke="#d0d0d0" stroke-width="1.4"/></svg><div class="a" style="left:214px;top:41px;width:3px;height:671px;background:#2e3033"></div><div class="a" style="left:220px;top:43px;width:1669px;height:644px;background:#000;overflow:hidden"><div class="a" style="left:0;top:0;width:1669px;height:603px;overflow:hidden"><div class="a" style="left:19px;top:28px;width:0;height:0;border-left:6px solid transparent;border-right:6px solid transparent;border-top:6px solid #00b4bc"></div><div class="hd" style="left:50px;top:22px;text-align:left">代码</div><div class="hd" style="left:110px;top:22px;text-align:left">名称</div><div class="hd" style="left:66.5px;width:200px;top:22px">最新</div><div class="hd" style="left:126.5px;width:200px;top:22px">现手</div><div class="hd" style="left:186.5px;width:200px;top:22px">委买价</div><div class="hd" style="left:246.5px;width:200px;top:22px">委买量</div><div class="hd" style="left:306.5px;width:200px;top:22px">委卖价</div><div class="hd" style="left:366.5px;width:200px;top:22px">委卖量</div><div class="hd" style="left:432.5px;width:200px;top:22px">总手</div><div class="hd" style="left:492.5px;width:200px;top:22px">涨幅</div><div class="hd" style="left:552.5px;width:200px;top:22px">涨跌</div><div class="hd" style="left:612.5px;width:200px;top:22px">振幅</div><div class="hd" style="left:679.5px;width:200px;top:22px">持仓量</div><div class="hd" style="left:739.5px;width:200px;top:22px">仓差</div><div class="hd" style="left:799.5px;width:200px;top:22px">今开</div><div class="hd" style="left:859.5px;width:200px;top:22px">最高</div><div class="hd" style="left:919.5px;width:200px;top:22px">最低</div><div class="hd" style="left:979.5px;width:200px;top:22px">前结</div><div class="hd" style="left:1039.5px;width:200px;top:22px">量比</div><div class="hd" style="left:1099.5px;width:200px;top:22px">前收</div><div class="hd" style="left:1160px;width:200px;top:22px">总额</div><div class="hd" style="left:1219.5px;width:200px;top:22px">涨速</div><div class="a" style="left:1px;top:43px;width:1651px;height:1px;background:#00c8c8"></div><div class="num" style="left:16px;top:43.5px;color:#dcdcdc;transform-origin:0 50%;text-align:left">55</div><div class="num" style="left:50px;top:43.5px;color:#e8e800;transform-origin:0 50%;text-align:left">A013</div><div class="t" style="left:110px;top:43.5px;line-height:26px;font-size:14px;color:#dcd214">氧化铝加权</div><div class="num" style="left:66.5px;width:200px;top:43.5px;color:#00c800">2938</div><div class="num" style="left:126.5px;width:200px;top:43.5px;color:#ff3c3c">2</div><div class="dash" style="left:375.5px;top:55px;width:9px;background:#00c800"></div><div class="dash" style="left:435.5px;top:55px;width:9px;background:#e8e800"></div><div class="dash" style="left:495.5px;top:55px;width:9px;background:#00c800"></div><div class="dash" style="left:555.5px;top:55px;width:9px;background:#e8e800"></div><div class="num" style="left:432.5px;width:200px;top:43.5px;color:#e8e800">490408</div><div class="num" style="left:492.5px;width:200px;top:43.5px;color:#00c800">—1.67%</div><div class="num" style="left:552.5px;width:200px;top:43.5px;color:#00c800">—50</div><div class="num" style="left:612.5px;width:200px;top:43.5px;color:#e8e800">2.71%</div><div class="num" style="left:679.5px;width:200px;top:43.5px;color:#e8e800">445715</div><div class="num" style="left:739.5px;width:200px;top:43.5px;color:#e8e800">41162</div><div class="num" style="left:799.5px;width:200px;top:43.5px;color:#00c800">2981</div><div class="num" style="left:859.5px;width:200px;top:43.5px;color:#00c800">2985</div><div class="num" style="left:919.5px;width:200px;top:43.5px;color:#00c800">2904</div><div class="num" style="left:979.5px;width:200px;top:43.5px;color:#dcdcdc">2988</div><div class="num" style="left:1039.5px;width:200px;top:43.5px;color:#e8e800">1.41</div><div class="num" style="left:1099.5px;width:200px;top:43.5px;color:#dcdcdc">2979</div><div class="num" style="left:1160px;width:200px;top:43.5px;color:#e8e800">288亿</div><div class="num" style="left:1219.5px;width:200px;top:43.5px;color:#ff3c3c">0.07%</div><div class="num" style="left:16px;top:69.5px;color:#dcdcdc;transform-origin:0 50%;text-align:left">56</div><div class="num" style="left:50px;top:69.5px;color:#e8e800;transform-origin:0 50%;text-align:left">AU00</div><div class="t" style="left:110px;top:69.5px;line-height:26px;font-size:14px;color:#dcd214">黄金连续</div><div class="num" style="left:66.5px;width:200px;top:69.5px;color:#00c800">835.08</div><div class="num" style="left:126.5px;width:200px;top:69.5px;color:#00c800">9</div><div class="num" style="left:186.5px;width:200px;top:69.5px;color:#00c800">835.20</div><div class="num" style="left:246.5px;width:200px;top:69.5px;color:#e8e800">13</div><div class="num" style="left:306.5px;width:200px;top:69.5px;color:#00c800">835.22</div><div class="num" style="left:366.5px;width:200px;top:69.5px;color:#e8e800">21</div><div class="num" style="left:432.5px;width:200px;top:69.5px;color:#e8e800">164286</div><div class="num" style="left:492.5px;width:200px;top:69.5px;color:#00c800">—0.36%</div><div class="num" style="left:552.5px;width:200px;top:69.5px;color:#00c800">—3.04</div><div class="num" style="left:612.5px;width:200px;top:69.5px;color:#e8e800">1.10%</div><div class="num" style="left:679.5px;width:200px;top:69.5px;color:#e8e800">95967</div><div class="num" style="left:739.5px;width:200px;top:69.5px;color:#e8e800">—8093</div><div class="num" style="left:799.5px;width:200px;top:69.5px;color:#ff3c3c">841.16</div><div class="num" style="left:859.5px;width:200px;top:69.5px;color:#ff3c3c">843.42</div><div class="num" style="left:919.5px;width:200px;top:69.5px;color:#00c800">834.16</div><div class="num" style="left:979.5px;width:200px;top:69.5px;color:#dcdcdc">838.12</div><div class="num" style="left:1039.5px;width:200px;top:69.5px;color:#e8e800">0.90</div><div class="num" style="left:1099.5px;width:200px;top:69.5px;color:#dcdcdc">842.08</div><div class="num" style="left:1160px;width:200px;top:69.5px;color:#e8e800">1378亿</div><div class="num" style="left:1219.5px;width:200px;top:69.5px;color:#00c800">—0.05%</div><div class="num" style="left:16px;top:95.5px;color:#dcdcdc;transform-origin:0 50%;text-align:left">57</div><div class="num" style="left:50px;top:95.5px;color:#e8e800;transform-origin:0 50%;text-align:left">AU01</div><div class="t" style="left:110px;top:95.5px;line-height:26px;font-size:14px;color:#dcd214">黄金2501</div><div class="dash" style="left:255.5px;top:107px;width:9px;background:#ff3c3c"></div><div class="dash" style="left:315.5px;top:107px;width:9px;background:#00c800"></div><div class="dash" style="left:375.5px;top:107px;width:9px;background:#00c800"></div><div class="dash" style="left:435.5px;top:107px;width:9px;background:#e8e800"></div><div class="dash" style="left:495.5px;top:107px;width:9px;background:#00c800"></div><div class="dash" style="left:555.5px;top:107px;width:9px;background:#e8e800"></div><div class="dash" style="left:621.5px;top:107px;width:9px;background:#e8e800"></div><div class="dash" style="left:681.5px;top:107px;width:9px;background:#dcdcdc"></div><div class="dash" style="left:741.5px;top:107px;width:9px;background:#dcdcdc"></div><div class="dash" style="left:801.5px;top:107px;width:9px;background:#e8e800"></div><div class="dash" style="left:868.5px;top:107px;width:9px;background:#e8e800"></div><div class="dash" style="left:928.5px;top:107px;width:9px;background:#e8e800"></div><div class="dash" style="left:988.5px;top:107px;width:9px;background:#dcdcdc"></div><div class="dash" style="left:1048.5px;top:107px;width:9px;background:#dcdcdc"></div><div class="dash" style="left:1108.5px;top:107px;width:9px;background:#dcdcdc"></div><div class="dash" style="left:1168.5px;top:107px;width:9px;background:#dcdcdc"></div><div class="dash" style="left:1228.5px;top:107px;width:9px;background:#e8e800"></div><div class="dash" style="left:1288.5px;top:107px;width:9px;background:#dcdcdc"></div><div class="dash" style="left:1349px;top:107px;width:9px;background:#e8e800"></div><div class="dash" style="left:1408.5px;top:107px;width:9px;background:#dcdcdc"></div><div class="num" style="left:16px;top:121.5px;color:#dcdcdc;transform-origin:0 50%;text-align:left">58</div><div class="num" style="left:50px;top:121.5px;color:#e8e800;transform-origin:0 50%;text-align:left">AU02</div><div class="t" style="left:110px;top:121.5px;line-height:26px;font-size:14px;color:#dcd214">黄金2602</div><div class="num" style="left:66.5px;width:200px;top:121.5px;color:#00c800">840.18</div><div class="num" style="left:126.5px;width:200px;top:121.5px;color:#ff3c3c">1</div><div class="num" style="left:186.5px;width:200px;top:121.5px;color:#00c800">840.08</div><div class="num" style="left:246.5px;width:200px;top:121.5px;color:#e8e800">1</div><div class="num" style="left:306.5px;width:200px;top:121.5px;color:#00c800">840.16</div><div class="num" style="left:366.5px;width:200px;top:121.5px;color:#e8e800">1</div><div class="num" style="left:432.5px;width:200px;top:121.5px;color:#e8e800">30201</div><div class="num" style="left:492.5px;width:200px;top:121.5px;color:#00c800">—0.36%</div><div class="num" style="left:552.5px;width:200px;top:121.5px;color:#00c800">—3.04</div><div class="num" style="left:612.5px;width:200px;top:121.5px;color:#e8e800">1.10%</div><div class="num" style="left:679.5px;width:200px;top:121.5px;color:#e8e800">1</div><div class="num" style="left:739.5px;width:200px;top:121.5px;color:#e8e800">1</div><div class="num" style="left:799.5px;width:200px;top:121.5px;color:#00c800">1</div><div class="num" style="left:859.5px;width:200px;top:121.5px;color:#00c800">1</div><div class="num" style="left:919.5px;width:200px;top:121.5px;color:#00c800">1</div><div class="num" style="left:979.5px;width:200px;top:121.5px;color:#dcdcdc">1</div><div class="num" style="left:1039.5px;width:200px;top:121.5px;color:#e8e800">1</div><div class="num" style="left:1099.5px;width:200px;top:121.5px;color:#dcdcdc">1</div><div class="num" style="left:1160px;width:200px;top:121.5px;color:#e8e800">2亿</div><div class="num" style="left:1219.5px;width:200px;top:121.5px;color:#00c800">—0.03%</div><div class="num" style="left:16px;top:147.5px;color:#dcdcdc;transform-origin:0 50%;text-align:left">59</div><div class="num" style="left:50px;top:147.5px;color:#e8e800;transform-origin:0 50%;text-align:left">AU03</div><div class="t" style="left:110px;top:147.5px;line-height:26px;font-size:14px;color:#dcd214">黄金2503</div><div class="dash" style="left:255.5px;top:159px;width:9px;background:#ff3c3c"></div><div class="dash" style="left:315.5px;top:159px;width:9px;background:#00c800"></div><div class="dash" style="left:375.5px;top:159px;width:9px;background:#00c800"></div><div class="dash" style="left:435.5px;top:159px;width:9px;background:#e8e800"></div><div class="dash" style="left:495.5px;top:159px;width:9px;background:#00c800"></div><div class="dash" style="left:555.5px;top:159px;width:9px;background:#e8e800"></div><div class="dash" style="left:621.5px;top:159px;width:9px;background:#e8e800"></div><div class="dash" style="left:681.5px;top:159px;width:9px;background:#dcdcdc"></div><div class="dash" style="left:741.5px;top:159px;width:9px;background:#dcdcdc"></div><div class="dash" style="left:801.5px;top:159px;width:9px;background:#e8e800"></div><div class="dash" style="left:868.5px;top:159px;width:9px;background:#e8e800"></div><div class="dash" style="left:928.5px;top:159px;width:9px;background:#e8e800"></div><div class="dash" style="left:988.5px;top:159px;width:9px;background:#dcdcdc"></div><div class="dash" style="left:1048.5px;top:159px;width:9px;background:#dcdcdc"></div><div class="dash" style="left:1108.5px;top:159px;width:9px;background:#dcdcdc"></div><div class="dash" style="left:1168.5px;top:159px;width:9px;background:#dcdcdc"></div><div class="dash" style="left:1228.5px;top:159px;width:9px;background:#e8e800"></div><div class="dash" style="left:1288.5px;top:159px;width:9px;background:#dcdcdc"></div><div class="dash" style="left:1349px;top:159px;width:9px;background:#e8e800"></div><div class="dash" style="left:1408.5px;top:159px;width:9px;background:#dcdcdc"></div><div class="num" style="left:16px;top:173.5px;color:#dcdcdc;transform-origin:0 50%;text-align:left">60</div><div class="num" style="left:50px;top:173.5px;color:#e8e800;transform-origin:0 50%;text-align:left">AU04</div><div class="t" style="left:110px;top:173.5px;line-height:26px;font-size:14px;color:#dcd214">黄金2604</div><div class="num" style="left:66.5px;width:200px;top:173.5px;color:#00c800">842.44</div><div class="num" style="left:126.5px;width:200px;top:173.5px;color:#ff3c3c">1</div><div class="num" style="left:186.5px;width:200px;top:173.5px;color:#00c800">842.20</div><div class="num" style="left:246.5px;width:200px;top:173.5px;color:#e8e800">1</div><div class="num" style="left:306.5px;width:200px;top:173.5px;color:#00c800">842.50</div><div class="num" style="left:366.5px;width:200px;top:173.5px;color:#e8e800">1</div><div class="num" style="left:432.5px;width:200px;top:173.5px;color:#e8e800">4965</div><div class="num" style="left:492.5px;width:200px;top:173.5px;color:#00c800">—0.32%</div><div class="num" style="left:552.5px;width:200px;top:173.5px;color:#00c800">—3.04</div><div class="num" style="left:612.5px;width:200px;top:173.5px;color:#e8e800">1.10%</div><div class="num" style="left:679.5px;width:200px;top:173.5px;color:#e8e800">1</div><div class="num" style="left:739.5px;width:200px;top:173.5px;color:#e8e800">1</div><div class="num" style="left:799.5px;width:200px;top:173.5px;color:#00c800">1</div><div class="num" style="left:859.5px;width:200px;top:173.5px;color:#00c800">1</div><div class="num" style="left:919.5px;width:200px;top:173.5px;color:#00c800">1</div><div class="num" style="left:979.5px;width:200px;top:173.5px;color:#dcdcdc">1</div><div class="num" style="left:1039.5px;width:200px;top:173.5px;color:#e8e800">1</div><div class="num" style="left:1099.5px;width:200px;top:173.5px;color:#dcdcdc">1</div><div class="num" style="left:1160px;width:200px;top:173.5px;color:#e8e800">2亿</div><div class="num" style="left:1219.5px;width:200px;top:173.5px;color:#00c800">—0.03%</div><div class="num" style="left:16px;top:199.5px;color:#dcdcdc;transform-origin:0 50%;text-align:left">61</div><div class="num" style="left:50px;top:199.5px;color:#e8e800;transform-origin:0 50%;text-align:left">AU05</div><div class="t" style="left:110px;top:199.5px;line-height:26px;font-size:14px;color:#dcd214">黄金2505</div><div class="dash" style="left:255.5px;top:211px;width:9px;background:#dcdcdc"></div><div class="dash" style="left:315.5px;top:211px;width:9px;background:#00c800"></div><div class="dash" style="left:375.5px;top:211px;width:9px;background:#00c800"></div><div class="dash" style="left:435.5px;top:211px;width:9px;background:#e8e800"></div><div class="dash" style="left:495.5px;top:211px;width:9px;background:#00c800"></div><div class="dash" style="left:555.5px;top:211px;width:9px;background:#e8e800"></div><div class="dash" style="left:621.5px;top:211px;width:9px;background:#e8e800"></div><div class="dash" style="left:681.5px;top:211px;width:9px;background:#dcdcdc"></div><div class="dash" style="left:741.5px;top:211px;width:9px;background:#dcdcdc"></div><div class="dash" style="left:801.5px;top:211px;width:9px;background:#e8e800"></div><div class="dash" style="left:868.5px;top:211px;width:9px;background:#e8e800"></div><div class="dash" style="left:928.5px;top:211px;width:9px;background:#e8e800"></div><div class="dash" style="left:988.5px;top:211px;width:9px;background:#dcdcdc"></div><div class="dash" style="left:1048.5px;top:211px;width:9px;background:#dcdcdc"></div><div class="dash" style="left:1108.5px;top:211px;width:9px;background:#dcdcdc"></div><div class="dash" style="left:1168.5px;top:211px;width:9px;background:#dcdcdc"></div><div class="dash" style="left:1228.5px;top:211px;width:9px;background:#e8e800"></div><div class="dash" style="left:1288.5px;top:211px;width:9px;background:#dcdcdc"></div><div class="dash" style="left:1349px;top:211px;width:9px;background:#e8e800"></div><div class="dash" style="left:1408.5px;top:211px;width:9px;background:#dcdcdc"></div><div class="num" style="left:16px;top:225.5px;color:#dcdcdc;transform-origin:0 50%;text-align:left">62</div><div class="num" style="left:50px;top:225.5px;color:#e8e800;transform-origin:0 50%;text-align:left">AU06</div><div class="t" style="left:110px;top:225.5px;line-height:26px;font-size:14px;color:#dcd214">黄金2606</div><div class="num" style="left:66.5px;width:200px;top:225.5px;color:#00c800">844.70</div><div class="num" style="left:126.5px;width:200px;top:225.5px;color:#00c800">1</div><div class="num" style="left:186.5px;width:200px;top:225.5px;color:#00c800">844.62</div><div class="num" style="left:246.5px;width:200px;top:225.5px;color:#e8e800">1</div><div class="num" style="left:306.5px;width:200px;top:225.5px;color:#00c800">844.90</div><div class="num" style="left:366.5px;width:200px;top:225.5px;color:#e8e800">2</div><div class="num" style="left:432.5px;width:200px;top:225.5px;color:#e8e800">2565</div><div class="num" style="left:492.5px;width:200px;top:225.5px;color:#00c800">—0.34%</div><div class="num" style="left:552.5px;width:200px;top:225.5px;color:#00c800">—3.04</div><div class="num" style="left:612.5px;width:200px;top:225.5px;color:#e8e800">1.10%</div><div class="num" style="left:679.5px;width:200px;top:225.5px;color:#e8e800">1</div><div class="num" style="left:739.5px;width:200px;top:225.5px;color:#e8e800">1</div><div class="num" style="left:799.5px;width:200px;top:225.5px;color:#00c800">1</div><div class="num" style="left:859.5px;width:200px;top:225.5px;color:#00c800">1</div><div class="num" style="left:919.5px;width:200px;top:225.5px;color:#00c800">1</div><div class="num" style="left:979.5px;width:200px;top:225.5px;color:#dcdcdc">1</div><div class="num" style="left:1039.5px;width:200px;top:225.5px;color:#e8e800">1</div><div class="num" style="left:1099.5px;width:200px;top:225.5px;color:#dcdcdc">1</div><div class="num" style="left:1160px;width:200px;top:225.5px;color:#e8e800">2亿</div><div class="num" style="left:1219.5px;width:200px;top:225.5px;color:#00c800">—0.04%</div><div class="num" style="left:16px;top:251.5px;color:#dcdcdc;transform-origin:0 50%;text-align:left">63</div><div class="num" style="left:50px;top:251.5px;color:#e8e800;transform-origin:0 50%;text-align:left">AU07</div><div class="t" style="left:110px;top:251.5px;line-height:26px;font-size:14px;color:#dcd214">黄金2507</div><div class="dash" style="left:255.5px;top:263px;width:9px;background:#00c800"></div><div class="dash" style="left:315.5px;top:263px;width:9px;background:#ff3c3c"></div><div class="dash" style="left:375.5px;top:263px;width:9px;background:#00c800"></div><div class="dash" style="left:435.5px;top:263px;width:9px;background:#e8e800"></div><div class="dash" style="left:495.5px;top:263px;width:9px;background:#00c800"></div><div class="dash" style="left:555.5px;top:263px;width:9px;background:#e8e800"></div><div class="dash" style="left:621.5px;top:263px;width:9px;background:#e8e800"></div><div class="dash" style="left:681.5px;top:263px;width:9px;background:#dcdcdc"></div><div class="dash" style="left:741.5px;top:263px;width:9px;background:#dcdcdc"></div><div class="dash" style="left:801.5px;top:263px;width:9px;background:#e8e800"></div><div class="dash" style="left:868.5px;top:263px;width:9px;background:#e8e800"></div><div class="dash" style="left:928.5px;top:263px;width:9px;background:#e8e800"></div><div class="dash" style="left:988.5px;top:263px;width:9px;background:#dcdcdc"></div><div class="dash" style="left:1048.5px;top:263px;width:9px;background:#dcdcdc"></div><div class="dash" style="left:1108.5px;top:263px;width:9px;background:#dcdcdc"></div><div class="dash" style="left:1168.5px;top:263px;width:9px;background:#dcdcdc"></div><div class="dash" style="left:1228.5px;top:263px;width:9px;background:#e8e800"></div><div class="dash" style="left:1288.5px;top:263px;width:9px;background:#dcdcdc"></div><div class="dash" style="left:1349px;top:263px;width:9px;background:#e8e800"></div><div class="dash" style="left:1408.5px;top:263px;width:9px;background:#dcdcdc"></div><div class="num" style="left:16px;top:277.5px;color:#dcdcdc;transform-origin:0 50%;text-align:left">64</div><div class="num" style="left:50px;top:277.5px;color:#e8e800;transform-origin:0 50%;text-align:left">AU08</div><div class="t" style="left:110px;top:277.5px;line-height:26px;font-size:14px;color:#dcd214">黄金2608</div><div class="num" style="left:66.5px;width:200px;top:277.5px;color:#00c800">847.30</div><div class="num" style="left:126.5px;width:200px;top:277.5px;color:#00c800">1</div><div class="num" style="left:186.5px;width:200px;top:277.5px;color:#00c800">847.28</div><div class="num" style="left:246.5px;width:200px;top:277.5px;color:#e8e800">1</div><div class="num" style="left:306.5px;width:200px;top:277.5px;color:#00c800">848.44</div><div class="num" style="left:366.5px;width:200px;top:277.5px;color:#e8e800">3</div><div class="num" style="left:432.5px;width:200px;top:277.5px;color:#e8e800">1507</div><div class="num" style="left:492.5px;width:200px;top:277.5px;color:#00c800">—0.33%</div><div class="num" style="left:552.5px;width:200px;top:277.5px;color:#00c800">—3.04</div><div class="num" style="left:612.5px;width:200px;top:277.5px;color:#e8e800">1.10%</div><div class="num" style="left:679.5px;width:200px;top:277.5px;color:#e8e800">1</div><div class="num" style="left:739.5px;width:200px;top:277.5px;color:#e8e800">1</div><div class="num" style="left:799.5px;width:200px;top:277.5px;color:#00c800">1</div><div class="num" style="left:859.5px;width:200px;top:277.5px;color:#00c800">1</div><div class="num" style="left:919.5px;width:200px;top:277.5px;color:#00c800">1</div><div class="num" style="left:979.5px;width:200px;top:277.5px;color:#dcdcdc">1</div><div class="num" style="left:1039.5px;width:200px;top:277.5px;color:#e8e800">1</div><div class="num" style="left:1099.5px;width:200px;top:277.5px;color:#dcdcdc">1</div><div class="num" style="left:1160px;width:200px;top:277.5px;color:#e8e800">2亿</div><div class="num" style="left:1219.5px;width:200px;top:277.5px;color:#00c800">—0.04%</div><div class="num" style="left:16px;top:303.5px;color:#dcdcdc;transform-origin:0 50%;text-align:left">65</div><div class="num" style="left:50px;top:303.5px;color:#e8e800;transform-origin:0 50%;text-align:left">AU09</div><div class="t" style="left:110px;top:303.5px;line-height:26px;font-size:14px;color:#dcd214">黄金2509</div><div class="dash" style="left:255.5px;top:315px;width:9px;background:#00c800"></div><div class="dash" style="left:315.5px;top:315px;width:9px;background:#00c800"></div><div class="dash" style="left:375.5px;top:315px;width:9px;background:#00c800"></div><div class="dash" style="left:435.5px;top:315px;width:9px;background:#e8e800"></div><div class="dash" style="left:495.5px;top:315px;width:9px;background:#00c800"></div><div class="dash" style="left:555.5px;top:315px;width:9px;background:#e8e800"></div><div class="dash" style="left:621.5px;top:315px;width:9px;background:#e8e800"></div><div class="dash" style="left:681.5px;top:315px;width:9px;background:#dcdcdc"></div><div class="dash" style="left:741.5px;top:315px;width:9px;background:#dcdcdc"></div><div class="dash" style="left:801.5px;top:315px;width:9px;background:#e8e800"></div><div class="dash" style="left:868.5px;top:315px;width:9px;background:#e8e800"></div><div class="dash" style="left:928.5px;top:315px;width:9px;background:#e8e800"></div><div class="dash" style="left:988.5px;top:315px;width:9px;background:#dcdcdc"></div><div class="dash" style="left:1048.5px;top:315px;width:9px;background:#dcdcdc"></div><div class="dash" style="left:1108.5px;top:315px;width:9px;background:#dcdcdc"></div><div class="dash" style="left:1168.5px;top:315px;width:9px;background:#dcdcdc"></div><div class="dash" style="left:1228.5px;top:315px;width:9px;background:#e8e800"></div><div class="dash" style="left:1288.5px;top:315px;width:9px;background:#dcdcdc"></div><div class="dash" style="left:1349px;top:315px;width:9px;background:#e8e800"></div><div class="dash" style="left:1408.5px;top:315px;width:9px;background:#dcdcdc"></div><div class="num" style="left:16px;top:329.5px;color:#dcdcdc;transform-origin:0 50%;text-align:left">66</div><div class="num" style="left:50px;top:329.5px;color:#e8e800;transform-origin:0 50%;text-align:left">AU10</div><div class="t" style="left:110px;top:329.5px;line-height:26px;font-size:14px;color:#dcd214">黄金2510</div><div class="t" style="left:172px;top:331.5px;line-height:8px;font-size:8px;font-family:'Liberation Serif';color:#ff3c3c">M</div><div class="num" style="left:66.5px;width:200px;top:329.5px;color:#00c800">835.08</div><div class="num" style="left:126.5px;width:200px;top:329.5px;color:#00c800">9</div><div class="num" style="left:186.5px;width:200px;top:329.5px;color:#00c800">835.20</div><div class="num" style="left:246.5px;width:200px;top:329.5px;color:#e8e800">13</div><div class="num" style="left:306.5px;width:200px;top:329.5px;color:#00c800">835.22</div><div class="num" style="left:366.5px;width:200px;top:329.5px;color:#e8e800">21</div><div class="num" style="left:432.5px;width:200px;top:329.5px;color:#e8e800">164286</div><div class="num" style="left:492.5px;width:200px;top:329.5px;color:#00c800">—0.36%</div><div class="num" style="left:552.5px;width:200px;top:329.5px;color:#00c800">—3.04</div><div class="num" style="left:612.5px;width:200px;top:329.5px;color:#e8e800">1.10%</div><div class="num" style="left:679.5px;width:200px;top:329.5px;color:#e8e800">1</div><div class="num" style="left:739.5px;width:200px;top:329.5px;color:#e8e800">1</div><div class="num" style="left:799.5px;width:200px;top:329.5px;color:#00c800">1</div><div class="num" style="left:859.5px;width:200px;top:329.5px;color:#00c800">1</div><div class="num" style="left:919.5px;width:200px;top:329.5px;color:#00c800">1</div><div class="num" style="left:979.5px;width:200px;top:329.5px;color:#dcdcdc">1</div><div class="num" style="left:1039.5px;width:200px;top:329.5px;color:#e8e800">1</div><div class="num" style="left:1099.5px;width:200px;top:329.5px;color:#dcdcdc">1</div><div class="num" style="left:1160px;width:200px;top:329.5px;color:#e8e800">2亿</div><div class="num" style="left:1219.5px;width:200px;top:329.5px;color:#00c800">—0.05%</div><div class="num" style="left:16px;top:355.5px;color:#dcdcdc;transform-origin:0 50%;text-align:left">67</div><div class="num" style="left:50px;top:355.5px;color:#e8e800;transform-origin:0 50%;text-align:left">AU11</div><div class="t" style="left:110px;top:355.5px;line-height:26px;font-size:14px;color:#dcd214">黄金2511</div><div class="num" style="left:66.5px;width:200px;top:355.5px;color:#00c800">836.40</div><div class="num" style="left:126.5px;width:200px;top:355.5px;color:#ff3c3c">1</div><div class="num" style="left:186.5px;width:200px;top:355.5px;color:#00c800">836.28</div><div class="num" style="left:246.5px;width:200px;top:355.5px;color:#e8e800">2</div><div class="num" style="left:306.5px;width:200px;top:355.5px;color:#00c800">836.92</div><div class="num" style="left:366.5px;width:200px;top:355.5px;color:#e8e800">1</div><div class="num" style="left:432.5px;width:200px;top:355.5px;color:#e8e800">1668</div><div class="num" style="left:492.5px;width:200px;top:355.5px;color:#00c800">—0.36%</div><div class="num" style="left:552.5px;width:200px;top:355.5px;color:#00c800">—3.04</div><div class="num" style="left:612.5px;width:200px;top:355.5px;color:#e8e800">1.10%</div><div class="num" style="left:679.5px;width:200px;top:355.5px;color:#e8e800">1</div><div class="num" style="left:739.5px;width:200px;top:355.5px;color:#e8e800">1</div><div class="num" style="left:799.5px;width:200px;top:355.5px;color:#00c800">1</div><div class="num" style="left:859.5px;width:200px;top:355.5px;color:#00c800">1</div><div class="num" style="left:919.5px;width:200px;top:355.5px;color:#00c800">1</div><div class="num" style="left:979.5px;width:200px;top:355.5px;color:#dcdcdc">1</div><div class="num" style="left:1039.5px;width:200px;top:355.5px;color:#e8e800">1</div><div class="num" style="left:1099.5px;width:200px;top:355.5px;color:#dcdcdc">1</div><div class="num" style="left:1160px;width:200px;top:355.5px;color:#e8e800">2亿</div><div class="num" style="left:1219.5px;width:200px;top:355.5px;color:#00c800">—0.03%</div><div class="num" style="left:16px;top:381.5px;color:#dcdcdc;transform-origin:0 50%;text-align:left">68</div><div class="num" style="left:50px;top:381.5px;color:#e8e800;transform-origin:0 50%;text-align:left">AU12</div><div class="t" style="left:110px;top:381.5px;line-height:26px;font-size:14px;color:#dcd214">黄金2512</div><div class="num" style="left:66.5px;width:200px;top:381.5px;color:#00c800">837.64</div><div class="num" style="left:126.5px;width:200px;top:381.5px;color:#ff3c3c">1</div><div class="num" style="left:186.5px;width:200px;top:381.5px;color:#00c800">837.58</div><div class="num" style="left:246.5px;width:200px;top:381.5px;color:#e8e800">1</div><div class="num" style="left:306.5px;width:200px;top:381.5px;color:#00c800">837.60</div><div class="num" style="left:366.5px;width:200px;top:381.5px;color:#e8e800">5</div><div class="num" style="left:432.5px;width:200px;top:381.5px;color:#e8e800">160371</div><div class="num" style="left:492.5px;width:200px;top:381.5px;color:#00c800">—0.37%</div><div class="num" style="left:552.5px;width:200px;top:381.5px;color:#00c800">—3.04</div><div class="num" style="left:612.5px;width:200px;top:381.5px;color:#e8e800">1.10%</div><div class="num" style="left:679.5px;width:200px;top:381.5px;color:#e8e800">1</div><div class="num" style="left:739.5px;width:200px;top:381.5px;color:#e8e800">1</div><div class="num" style="left:799.5px;width:200px;top:381.5px;color:#00c800">1</div><div class="num" style="left:859.5px;width:200px;top:381.5px;color:#00c800">1</div><div class="num" style="left:919.5px;width:200px;top:381.5px;color:#00c800">1</div><div class="num" style="left:979.5px;width:200px;top:381.5px;color:#dcdcdc">1</div><div class="num" style="left:1039.5px;width:200px;top:381.5px;color:#e8e800">1</div><div class="num" style="left:1099.5px;width:200px;top:381.5px;color:#dcdcdc">1</div><div class="num" style="left:1160px;width:200px;top:381.5px;color:#e8e800">2亿</div><div class="num" style="left:1219.5px;width:200px;top:381.5px;color:#00c800">—0.03%</div><div class="num" style="left:16px;top:407.5px;color:#dcdcdc;transform-origin:0 50%;text-align:left">69</div><div class="num" style="left:50px;top:407.5px;color:#e8e800;transform-origin:0 50%;text-align:left">AU13</div><div class="t" style="left:110px;top:407.5px;line-height:26px;font-size:14px;color:#dcd214">黄金加权</div><div class="num" style="left:66.5px;width:200px;top:407.5px;color:#00c800">838.21</div><div class="num" style="left:126.5px;width:200px;top:407.5px;color:#ff3c3c">1</div><div class="dash" style="left:375.5px;top:419px;width:9px;background:#00c800"></div><div class="dash" style="left:435.5px;top:419px;width:9px;background:#e8e800"></div><div class="dash" style="left:495.5px;top:419px;width:9px;background:#00c800"></div><div class="dash" style="left:555.5px;top:419px;width:9px;background:#e8e800"></div><div class="num" style="left:432.5px;width:200px;top:407.5px;color:#e8e800">366302</div><div class="num" style="left:492.5px;width:200px;top:407.5px;color:#00c800">—0.35%</div><div class="num" style="left:552.5px;width:200px;top:407.5px;color:#00c800">—3.04</div><div class="num" style="left:612.5px;width:200px;top:407.5px;color:#e8e800">1.10%</div><div class="num" style="left:679.5px;width:200px;top:407.5px;color:#e8e800">1</div><div class="num" style="left:739.5px;width:200px;top:407.5px;color:#e8e800">1</div><div class="num" style="left:799.5px;width:200px;top:407.5px;color:#00c800">1</div><div class="num" style="left:859.5px;width:200px;top:407.5px;color:#00c800">1</div><div class="num" style="left:919.5px;width:200px;top:407.5px;color:#00c800">1</div><div class="num" style="left:979.5px;width:200px;top:407.5px;color:#dcdcdc">1</div><div class="num" style="left:1039.5px;width:200px;top:407.5px;color:#e8e800">1</div><div class="num" style="left:1099.5px;width:200px;top:407.5px;color:#dcdcdc">1</div><div class="num" style="left:1160px;width:200px;top:407.5px;color:#e8e800">2亿</div><div class="num" style="left:1219.5px;width:200px;top:407.5px;color:#00c800">—0.03%</div><div class="num" style="left:16px;top:433.5px;color:#dcdcdc;transform-origin:0 50%;text-align:left">70</div><div class="num" style="left:50px;top:433.5px;color:#e8e800;transform-origin:0 50%;text-align:left">AU30</div><div class="t" style="left:110px;top:433.5px;line-height:26px;font-size:14px;color:#dcd214">商品加权</div><div class="num" style="left:66.5px;width:200px;top:433.5px;color:#00c800">889.66</div><div class="num" style="left:126.5px;width:200px;top:433.5px;color:#ff3c3c">1186</div><div class="dash" style="left:375.5px;top:445px;width:9px;background:#00c800"></div><div class="dash" style="left:435.5px;top:445px;width:9px;background:#e8e800"></div><div class="dash" style="left:495.5px;top:445px;width:9px;background:#00c800"></div><div class="dash" style="left:555.5px;top:445px;width:9px;background:#e8e800"></div><div class="num" style="left:432.5px;width:200px;top:433.5px;color:#e8e800">23358332</div><div class="num" style="left:492.5px;width:200px;top:433.5px;color:#00c800">—0.09%</div><div class="num" style="left:552.5px;width:200px;top:433.5px;color:#00c800">—3.04</div><div class="num" style="left:612.5px;width:200px;top:433.5px;color:#e8e800">1.10%</div><div class="num" style="left:679.5px;width:200px;top:433.5px;color:#e8e800">1</div><div class="num" style="left:739.5px;width:200px;top:433.5px;color:#e8e800">1</div><div class="num" style="left:799.5px;width:200px;top:433.5px;color:#00c800">1</div><div class="num" style="left:859.5px;width:200px;top:433.5px;color:#00c800">1</div><div class="num" style="left:919.5px;width:200px;top:433.5px;color:#00c800">1</div><div class="num" style="left:979.5px;width:200px;top:433.5px;color:#dcdcdc">1</div><div class="num" style="left:1039.5px;width:200px;top:433.5px;color:#e8e800">1</div><div class="num" style="left:1099.5px;width:200px;top:433.5px;color:#dcdcdc">1</div><div class="num" style="left:1160px;width:200px;top:433.5px;color:#e8e800">2亿</div><div class="num" style="left:1219.5px;width:200px;top:433.5px;color:#ff3c3c">0.01%</div><div class="num" style="left:16px;top:459.5px;color:#dcdcdc;transform-origin:0 50%;text-align:left">71</div><div class="num" style="left:50px;top:459.5px;color:#e8e800;transform-origin:0 50%;text-align:left">AU31</div><div class="t" style="left:110px;top:459.5px;line-height:26px;font-size:14px;color:#dcd214">金属加权</div><div class="num" style="left:66.5px;width:200px;top:459.5px;color:#00c800">981.42</div><div class="num" style="left:126.5px;width:200px;top:459.5px;color:#ff3c3c">413</div><div class="dash" style="left:375.5px;top:471px;width:9px;background:#00c800"></div><div class="dash" style="left:435.5px;top:471px;width:9px;background:#e8e800"></div><div class="dash" style="left:495.5px;top:471px;width:9px;background:#00c800"></div><div class="dash" style="left:555.5px;top:471px;width:9px;background:#e8e800"></div><div class="num" style="left:432.5px;width:200px;top:459.5px;color:#e8e800">4663254</div><div class="num" style="left:492.5px;width:200px;top:459.5px;color:#00c800">—0.06%</div><div class="num" style="left:552.5px;width:200px;top:459.5px;color:#00c800">—3.04</div><div class="num" style="left:612.5px;width:200px;top:459.5px;color:#e8e800">1.10%</div><div class="num" style="left:679.5px;width:200px;top:459.5px;color:#e8e800">1</div><div class="num" style="left:739.5px;width:200px;top:459.5px;color:#e8e800">1</div><div class="num" style="left:799.5px;width:200px;top:459.5px;color:#00c800">1</div><div class="num" style="left:859.5px;width:200px;top:459.5px;color:#00c800">1</div><div class="num" style="left:919.5px;width:200px;top:459.5px;color:#00c800">1</div><div class="num" style="left:979.5px;width:200px;top:459.5px;color:#dcdcdc">1</div><div class="num" style="left:1039.5px;width:200px;top:459.5px;color:#e8e800">1</div><div class="num" style="left:1099.5px;width:200px;top:459.5px;color:#dcdcdc">1</div><div class="num" style="left:1160px;width:200px;top:459.5px;color:#e8e800">2亿</div><div class="num" style="left:1219.5px;width:200px;top:459.5px;color:#ff3c3c">0.01%</div><div class="num" style="left:16px;top:485.5px;color:#dcdcdc;transform-origin:0 50%;text-align:left">72</div><div class="num" style="left:50px;top:485.5px;color:#e8e800;transform-origin:0 50%;text-align:left">AU32</div><div class="t" style="left:110px;top:485.5px;line-height:26px;font-size:14px;color:#dcd214">能源加权</div><div class="num" style="left:66.5px;width:200px;top:485.5px;color:#ff3c3c">1094.90</div><div class="num" style="left:126.5px;width:200px;top:485.5px;color:#ff3c3c">51</div><div class="dash" style="left:375.5px;top:497px;width:9px;background:#00c800"></div><div class="dash" style="left:435.5px;top:497px;width:9px;background:#e8e800"></div><div class="dash" style="left:495.5px;top:497px;width:9px;background:#00c800"></div><div class="dash" style="left:555.5px;top:497px;width:9px;background:#e8e800"></div><div class="num" style="left:432.5px;width:200px;top:485.5px;color:#e8e800">2761376</div><div class="num" style="left:492.5px;width:200px;top:485.5px;color:#ff3c3c">0.70%</div><div class="num" style="left:552.5px;width:200px;top:485.5px;color:#00c800">—3.04</div><div class="num" style="left:612.5px;width:200px;top:485.5px;color:#e8e800">1.10%</div><div class="num" style="left:679.5px;width:200px;top:485.5px;color:#e8e800">1</div><div class="num" style="left:739.5px;width:200px;top:485.5px;color:#e8e800">1</div><div class="num" style="left:799.5px;width:200px;top:485.5px;color:#00c800">1</div><div class="num" style="left:859.5px;width:200px;top:485.5px;color:#00c800">1</div><div class="num" style="left:919.5px;width:200px;top:485.5px;color:#00c800">1</div><div class="num" style="left:979.5px;width:200px;top:485.5px;color:#dcdcdc">1</div><div class="num" style="left:1039.5px;width:200px;top:485.5px;color:#e8e800">1</div><div class="num" style="left:1099.5px;width:200px;top:485.5px;color:#dcdcdc">1</div><div class="num" style="left:1160px;width:200px;top:485.5px;color:#e8e800">2亿</div><div class="num" style="left:1219.5px;width:200px;top:485.5px;color:#00c800">—0.02%</div><div class="num" style="left:16px;top:511.5px;color:#dcdcdc;transform-origin:0 50%;text-align:left">73</div><div class="num" style="left:50px;top:511.5px;color:#e8e800;transform-origin:0 50%;text-align:left">AU33</div><div class="t" style="left:110px;top:511.5px;line-height:26px;font-size:14px;color:#dcd214">化工加权</div><div class="num" style="left:66.5px;width:200px;top:511.5px;color:#ff3c3c">501.71</div><div class="num" style="left:126.5px;width:200px;top:511.5px;color:#ff3c3c">378</div><div class="dash" style="left:375.5px;top:523px;width:9px;background:#00c800"></div><div class="dash" style="left:435.5px;top:523px;width:9px;background:#e8e800"></div><div class="dash" style="left:495.5px;top:523px;width:9px;background:#00c800"></div><div class="dash" style="left:555.5px;top:523px;width:9px;background:#e8e800"></div><div class="num" style="left:432.5px;width:200px;top:511.5px;color:#e8e800">6779289</div><div class="num" style="left:492.5px;width:200px;top:511.5px;color:#ff3c3c">0.06%</div><div class="num" style="left:552.5px;width:200px;top:511.5px;color:#00c800">—3.04</div><div class="num" style="left:612.5px;width:200px;top:511.5px;color:#e8e800">1.10%</div><div class="num" style="left:679.5px;width:200px;top:511.5px;color:#e8e800">1</div><div class="num" style="left:739.5px;width:200px;top:511.5px;color:#e8e800">1</div><div class="num" style="left:799.5px;width:200px;top:511.5px;color:#00c800">1</div><div class="num" style="left:859.5px;width:200px;top:511.5px;color:#00c800">1</div><div class="num" style="left:919.5px;width:200px;top:511.5px;color:#00c800">1</div><div class="num" style="left:979.5px;width:200px;top:511.5px;color:#dcdcdc">1</div><div class="num" style="left:1039.5px;width:200px;top:511.5px;color:#e8e800">1</div><div class="num" style="left:1099.5px;width:200px;top:511.5px;color:#dcdcdc">1</div><div class="num" style="left:1160px;width:200px;top:511.5px;color:#e8e800">2亿</div><div class="num" style="left:1219.5px;width:200px;top:511.5px;color:#ff3c3c">0.05%</div><div class="num" style="left:16px;top:537.5px;color:#dcdcdc;transform-origin:0 50%;text-align:left">74</div><div class="num" style="left:50px;top:537.5px;color:#e8e800;transform-origin:0 50%;text-align:left">AU34</div><div class="t" style="left:110px;top:537.5px;line-height:26px;font-size:14px;color:#dcd214">农产品加权</div><div class="num" style="left:66.5px;width:200px;top:537.5px;color:#00c800">977.61</div><div class="num" style="left:126.5px;width:200px;top:537.5px;color:#00c800">168</div><div class="dash" style="left:375.5px;top:549px;width:9px;background:#00c800"></div><div class="dash" style="left:435.5px;top:549px;width:9px;background:#e8e800"></div><div class="dash" style="left:495.5px;top:549px;width:9px;background:#00c800"></div><div class="dash" style="left:555.5px;top:549px;width:9px;background:#e8e800"></div><div class="num" style="left:432.5px;width:200px;top:537.5px;color:#e8e800">6547431</div><div class="num" style="left:492.5px;width:200px;top:537.5px;color:#00c800">—0.47%</div><div class="num" style="left:552.5px;width:200px;top:537.5px;color:#00c800">—3.04</div><div class="num" style="left:612.5px;width:200px;top:537.5px;color:#e8e800">1.10%</div><div class="num" style="left:679.5px;width:200px;top:537.5px;color:#e8e800">1</div><div class="num" style="left:739.5px;width:200px;top:537.5px;color:#e8e800">1</div><div class="num" style="left:799.5px;width:200px;top:537.5px;color:#00c800">1</div><div class="num" style="left:859.5px;width:200px;top:537.5px;color:#00c800">1</div><div class="num" style="left:919.5px;width:200px;top:537.5px;color:#00c800">1</div><div class="num" style="left:979.5px;width:200px;top:537.5px;color:#dcdcdc">1</div><div class="num" style="left:1039.5px;width:200px;top:537.5px;color:#e8e800">1</div><div class="num" style="left:1099.5px;width:200px;top:537.5px;color:#dcdcdc">1</div><div class="num" style="left:1160px;width:200px;top:537.5px;color:#e8e800">2亿</div><div class="num" style="left:1219.5px;width:200px;top:537.5px;color:#00c800">—0.02%</div><div class="num" style="left:16px;top:563.5px;color:#dcdcdc;transform-origin:0 50%;text-align:left">75</div><div class="num" style="left:50px;top:563.5px;color:#e8e800;transform-origin:0 50%;text-align:left">AU35</div><div class="t" style="left:110px;top:563.5px;line-height:26px;font-size:14px;color:#dcd214">油脂加权</div><div class="num" style="left:66.5px;width:200px;top:563.5px;color:#00c800">927.74</div><div class="num" style="left:126.5px;width:200px;top:563.5px;color:#ff3c3c">93</div><div class="dash" style="left:375.5px;top:575px;width:9px;background:#00c800"></div><div class="dash" style="left:435.5px;top:575px;width:9px;background:#e8e800"></div><div class="dash" style="left:495.5px;top:575px;width:9px;background:#00c800"></div><div class="dash" style="left:555.5px;top:575px;width:9px;background:#e8e800"></div><div class="num" style="left:432.5px;width:200px;top:563.5px;color:#e8e800">4261676</div><div class="num" style="left:492.5px;width:200px;top:563.5px;color:#00c800">—0.83%</div><div class="num" style="left:552.5px;width:200px;top:563.5px;color:#00c800">—3.04</div><div class="num" style="left:612.5px;width:200px;top:563.5px;color:#e8e800">1.10%</div><div class="num" style="left:679.5px;width:200px;top:563.5px;color:#e8e800">1</div><div class="num" style="left:739.5px;width:200px;top:563.5px;color:#e8e800">1</div><div class="num" style="left:799.5px;width:200px;top:563.5px;color:#00c800">1</div><div class="num" style="left:859.5px;width:200px;top:563.5px;color:#00c800">1</div><div class="num" style="left:919.5px;width:200px;top:563.5px;color:#00c800">1</div><div class="num" style="left:979.5px;width:200px;top:563.5px;color:#dcdcdc">1</div><div class="num" style="left:1039.5px;width:200px;top:563.5px;color:#e8e800">1</div><div class="num" style="left:1099.5px;width:200px;top:563.5px;color:#dcdcdc">1</div><div class="num" style="left:1160px;width:200px;top:563.5px;color:#e8e800">2亿</div><div class="num" style="left:1219.5px;width:200px;top:563.5px;color:#00c800">—0.03%</div><div class="num" style="left:16px;top:589.5px;color:#dcdcdc;transform-origin:0 50%;text-align:left">76</div><div class="num" style="left:50px;top:589.5px;color:#e8e800;transform-origin:0 50%;text-align:left">BR00</div><div class="t" style="left:110px;top:589.5px;line-height:26px;font-size:14px;color:#dcd214">丁二烯橡胶连续</div><div class="num" style="left:66.5px;width:200px;top:589.5px;color:#00c800">11590</div><div class="num" style="left:126.5px;width:200px;top:589.5px;color:#00c800">1</div><div class="num" style="left:186.5px;width:200px;top:589.5px;color:#00c800">11590</div><div class="num" style="left:246.5px;width:200px;top:589.5px;color:#e8e800">4</div><div class="num" style="left:306.5px;width:200px;top:589.5px;color:#00c800">11595</div><div class="num" style="left:366.5px;width:200px;top:589.5px;color:#e8e800">47</div><div class="num" style="left:432.5px;width:200px;top:589.5px;color:#e8e800">73189</div><div class="num" style="left:492.5px;width:200px;top:589.5px;color:#00c800">—0.69%</div><div class="num" style="left:552.5px;width:200px;top:589.5px;color:#00c800">—3.04</div><div class="num" style="left:612.5px;width:200px;top:589.5px;color:#e8e800">1.10%</div><div class="num" style="left:679.5px;width:200px;top:589.5px;color:#e8e800">1</div><div class="num" style="left:739.5px;width:200px;top:589.5px;color:#e8e800">1</div><div class="num" style="left:799.5px;width:200px;top:589.5px;color:#00c800">1</div><div class="num" style="left:859.5px;width:200px;top:589.5px;color:#00c800">1</div><div class="num" style="left:919.5px;width:200px;top:589.5px;color:#00c800">1</div><div class="num" style="left:979.5px;width:200px;top:589.5px;color:#dcdcdc">1</div><div class="num" style="left:1039.5px;width:200px;top:589.5px;color:#e8e800">1</div><div class="num" style="left:1099.5px;width:200px;top:589.5px;color:#dcdcdc">1</div><div class="num" style="left:1160px;width:200px;top:589.5px;color:#e8e800">2亿</div><div class="num" style="left:1219.5px;width:200px;top:589.5px;color:#ff3c3c">0.09%</div><div class="a" style="left:1px;top:355px;width:1651px;height:1px;background:#e8e800"></div></div></div><div class="a" style="left:221px;top:649px;width:1651px;height:1px;background:#303030"></div><div class="a" style="left:221px;top:649px;width:1px;height:36px;background:#303030"></div><div class="a" style="left:221px;top:666px;width:1651px;height:1px;background:#303030"></div><div class="a" style="left:221px;top:684px;width:1651px;height:1px;background:#303030"></div><div class="t" style="left:251px;top:649px;font-size:12px;line-height:18px;color:#c8c8c8">铝合金</div><div class="t" style="left:302.5px;top:649px;font-size:12px;line-height:18px;color:#c8c8c8">白银</div><div class="t" style="left:341px;top:649px;font-size:12px;line-height:18px;color:#c8c8c8">沪铝</div><div class="t" style="left:380px;top:649px;font-size:12px;line-height:18px;color:#c8c8c8">氧化铝</div><div class="t" style="left:431.6px;top:649px;font-size:12px;line-height:18px;color:#c8c8c8">黄金</div><div class="t" style="left:470px;top:649px;font-size:12px;line-height:18px;color:#c8c8c8">商品</div><div class="t" style="left:509px;top:649px;font-size:12px;line-height:18px;color:#c8c8c8">丁二烯橡胶</div><div class="t" style="left:584px;top:649px;font-size:12px;line-height:18px;color:#c8c8c8">沥青</div><div class="t" style="left:623px;top:649px;font-size:12px;line-height:18px;color:#c8c8c8">沪铜</div><div class="t" style="left:661.7px;top:649px;font-size:12px;line-height:18px;color:#c8c8c8">燃油</div><div class="t" style="left:700.8px;top:649px;font-size:12px;line-height:18px;color:#c8c8c8">轧卷板</div><div class="t" style="left:751.7px;top:649px;font-size:12px;line-height:18px;color:#c8c8c8">沪镍</div><div class="t" style="left:791px;top:649px;font-size:12px;line-height:18px;color:#c8c8c8">胶版印刷纸</div><div class="t" style="left:865.8px;top:649px;font-size:12px;line-height:18px;color:#c8c8c8">沪铅</div><div class="a" style="left:228px;top:671px;width:0;height:0;border-top:4.5px solid transparent;border-bottom:4.5px solid transparent;border-right:5px solid #404040"></div><div class="a" style="left:247px;top:671px;width:0;height:0;border-top:4.5px solid transparent;border-bottom:4.5px solid transparent;border-left:5px solid #404040"></div><div class="a" style="left:240px;top:667px;width:1px;height:17px;background:#303030"></div><div class="a" style="left:259px;top:667px;width:1px;height:17px;background:#303030"></div><svg class="a" style="left:0;top:0" width="1905" height="725"><path d="M260.8 667 L277.3 684.5 H356.2 V667" fill="#000" stroke="#303030" stroke-width="1"/><path d="M358 667 L374.5 684.5 H453 V667" fill="#000" stroke="#303030" stroke-width="1"/><path d="M446.6 667 L463.1 684.5 H543 V667" fill="#000" stroke="#303030" stroke-width="1"/><path d="M536 667 L552.5 684.5 H632 V667" fill="#000" stroke="#303030" stroke-width="1"/><path d="M625 667 L641.5 684.5 H721 V667" fill="#000" stroke="#303030" stroke-width="1"/><path d="M714 667 L730.5 684.5 H810 V667" fill="#000" stroke="#303030" stroke-width="1"/><path d="M803 667 L819.5 684.5 H895 V667" fill="#000" stroke="#303030" stroke-width="1"/><path d="M892 667 L908.5 684.5 H990 V667" fill="#000" stroke="#303030" stroke-width="1"/></svg><div class="a" style="left:278.8px;top:672px;width:0;height:0;border-left:4px solid transparent;border-right:4px solid transparent;border-bottom:8px solid #ff3c14"></div><div class="t" style="left:295.3px;top:668px;font-size:13px;line-height:18px;color:#ff3c14">上海期货</div><div class="a" style="left:368px;top:672px;width:0;height:0;border-left:4px solid transparent;border-right:4px solid transparent;border-bottom:8px solid #d0d0d0"></div><div class="t" style="left:384px;top:668px;font-size:13px;line-height:18px;color:#d8d8d8">SHFE-INE</div><div class="a" style="left:464px;top:672px;width:0;height:0;border-left:4px solid transparent;border-right:4px solid transparent;border-bottom:8px solid #d0d0d0"></div><div class="t" style="left:480.8px;top:668px;font-size:13px;line-height:18px;color:#d8d8d8">大连期货</div><div class="a" style="left:553.4px;top:672px;width:0;height:0;border-left:4px solid transparent;border-right:4px solid transparent;border-bottom:8px solid #d0d0d0"></div><div class="t" style="left:569.8px;top:668px;font-size:13px;line-height:18px;color:#d8d8d8">郑州期货</div><div class="a" style="left:642.8px;top:672px;width:0;height:0;border-left:4px solid transparent;border-right:4px solid transparent;border-bottom:8px solid #d0d0d0"></div><div class="t" style="left:659px;top:668px;font-size:13px;line-height:18px;color:#d8d8d8">广州期货</div><div class="a" style="left:731.8px;top:672px;width:0;height:0;border-left:4px solid transparent;border-right:4px solid transparent;border-bottom:8px solid #d0d0d0"></div><div class="t" style="left:747.9px;top:668px;font-size:13px;line-height:18px;color:#d8d8d8">金融期货</div><div class="a" style="left:820.5px;top:672px;width:0;height:0;border-left:4px solid transparent;border-right:4px solid transparent;border-bottom:8px solid #d0d0d0"></div><div class="t" style="left:836.8px;top:668px;font-size:13px;line-height:18px;color:#d8d8d8">深圳A股</div><div class="a" style="left:910px;top:672px;width:0;height:0;border-left:4px solid transparent;border-right:4px solid transparent;border-bottom:8px solid #d0d0d0"></div><div class="t" style="left:925px;top:668px;font-size:13px;line-height:18px;color:#d8d8d8"></div><div class="a" style="left:220px;top:687px;width:1671px;height:25px;background:#25282c"></div><div class="a" style="left:508px;top:689px;width:1383px;height:1px;background:#3a3d41"></div><svg class="a" style="left:0;top:0" width="1905" height="725"><path d="M218 689.5 H223 L243 709.5 H321 V703 L308 689.5 H223" fill="#292c33" stroke="#3a3d41" stroke-width="1"/><path d="M321 703 L328 709.5 H420.5 V689.5" fill="#25282c" stroke="#3a3d41" stroke-width="1"/><path d="M421.5 689.5 V704 Q421.5 709.5 427 709.5 H508 V689.5" fill="#292c33" stroke="#3a3d41" stroke-width="1"/></svg><div class="t" style="left:249.8px;top:690px;font-size:12px;line-height:18px;color:#e8e8e8;font-weight:400">综合管理</div><svg class="a" style="left:308px;top:697px" width="8" height="8" viewBox="0 0 8 8"><path d="M1 1 L7 7 M7 1 L1 7" stroke="#d8d8d8" stroke-width="1.5"/></svg><div class="t" style="left:334px;top:690px;font-size:12px;line-height:18px;color:#f5961e;font-weight:700">动态显示牌</div><svg class="a" style="left:407px;top:697px" width="8" height="8" viewBox="0 0 8 8"><path d="M1 1 L7 7 M7 1 L1 7" stroke="#d8d8d8" stroke-width="1.5"/></svg><div class="t" style="left:436px;top:690px;font-size:12px;line-height:18px;color:#e8e8e8;font-weight:400">技术分析</div><svg class="a" style="left:493px;top:697px" width="8" height="8" viewBox="0 0 8 8"><path d="M1 1 L7 7 M7 1 L1 7" stroke="#d8d8d8" stroke-width="1.5"/></svg><div class="a" style="left:1869px;top:696px;width:9px;height:2px;background:#e0e0e0"></div><div class="a" style="left:1869px;top:699px;width:9px;height:2px;background:#e0e0e0"></div><div class="a" style="left:1869px;top:702px;width:9px;height:2px;background:#e0e0e0"></div><div class="a" style="left:0;top:712px;width:1891px;height:6px;background:#4a4a4a"></div><div class="a" style="left:1731px;top:720px;width:20px;height:12px;border:1px solid #555;border-radius:5px"></div><div class="a" style="left:1757px;top:720px;width:20px;height:12px;border:1px solid #555;border-radius:5px"></div><div class="a" style="left:1783px;top:720px;width:20px;height:12px;border:1px solid #555;border-radius:5px"></div><div class="a" style="left:1872px;top:60px;width:1px;height:624px;background:#2e2e2e"></div><div class="a" style="left:1872px;top:60px;width:16px;height:16px;border:1px solid #2e2e2e"></div><div class="a" style="left:1876px;top:64px;width:0;height:0;border-left:4px solid transparent;border-right:4px solid transparent;border-bottom:6px solid #3c3c3c"></div><div class="a" style="left:1874px;top:184px;width:13px;height:43px;border-radius:7px;background:#2e2e2e"></div><div class="a" style="left:1877px;top:200px;width:7px;height:1px;background:#9a9a9a"></div><div class="a" style="left:1877px;top:203px;width:7px;height:1px;background:#9a9a9a"></div><div class="a" style="left:1877px;top:206px;width:7px;height:1px;background:#9a9a9a"></div><div class="a" style="left:1877px;top:209px;width:7px;height:1px;background:#9a9a9a"></div><div class="a" style="left:1872px;top:670px;width:16px;height:1px;background:#2e2e2e"></div><div class="a" style="left:1877px;top:675px;width:0;height:0;border-left:4px solid transparent;border-right:4px solid transparent;border-top:6px solid #3c3c3c"></div><div class="a" style="left:905px;top:667px;width:947px;height:18px;background:#2a2a2a;border-radius:0 6px 6px 0"></div><div class="a" style="left:1605px;top:670px;width:1px;height:11px;background:#b0b0b0"></div><div class="a" style="left:1608px;top:670px;width:1px;height:11px;background:#b0b0b0"></div><div class="a" style="left:1611px;top:670px;width:1px;height:11px;background:#b0b0b0"></div><div class="a" style="left:1614px;top:670px;width:1px;height:11px;background:#b0b0b0"></div><div class="a" style="left:1852px;top:667px;width:20px;height:18px;background:#000"></div><div class="a" style="left:1861px;top:671px;width:0;height:0;border-top:5px solid transparent;border-bottom:5px solid transparent;border-left:5px solid #3c3c3c"></div><div class="a" style="left:1889px;top:43px;width:16px;height:669px;background:#25282c"></div><div class="a" style="left:1891px;top:60px;width:14px;height:448px;background:#1f2226"></div><div class="t" style="left:1898px;top:61px;font-size:13px;line-height:18px;color:#d8d8d8">··</div><div class="t" style="left:1898px;top:81px;font-size:13px;line-height:18px;color:#d8d8d8">⊿</div><div class="t" style="left:1898px;top:101px;font-size:13px;line-height:18px;color:#d8d8d8">B</div><div class="t" style="left:1898px;top:123px;font-size:13px;line-height:18px;color:#d8d8d8">⊡</div><div class="t" style="left:1898px;top:145px;font-size:13px;line-height:18px;color:#d8d8d8">S</div><div class="t" style="left:1900px;top:167px;font-size:13px;line-height:18px;color:#d8d8d8">1</div><div class="t" style="left:1898px;top:189px;font-size:13px;line-height:18px;color:#d8d8d8">M</div><div class="t" style="left:1900px;top:211px;font-size:13px;line-height:18px;color:#d8d8d8">3</div><div class="t" style="left:1900px;top:233px;font-size:13px;line-height:18px;color:#d8d8d8">5</div><div class="t" style="left:1898px;top:255px;font-size:13px;line-height:18px;color:#d8d8d8">1</div><div class="t" style="left:1898px;top:277px;font-size:13px;line-height:18px;color:#d8d8d8">1</div><div class="t" style="left:1898px;top:299px;font-size:13px;line-height:18px;color:#d8d8d8">3</div><div class="t" style="left:1898px;top:321px;font-size:13px;line-height:18px;color:#d8d8d8">时</div><div class="t" style="left:1898px;top:343px;font-size:13px;line-height:18px;color:#d8d8d8">H</div><div class="t" style="left:1898px;top:365px;font-size:13px;line-height:18px;color:#d8d8d8">B</div><div class="t" style="left:1898px;top:387px;font-size:13px;line-height:18px;color:#d8d8d8">R</div><div class="t" style="left:1898px;top:409px;font-size:13px;line-height:18px;color:#d8d8d8">周</div><div class="t" style="left:1898px;top:431px;font-size:13px;line-height:18px;color:#d8d8d8">月</div><div class="t" style="left:1898px;top:453px;font-size:13px;line-height:18px;color:#d8d8d8">季</div><div class="t" style="left:1898px;top:475px;font-size:13px;line-height:18px;color:#d8d8d8">年</div><div class="a" style="left:1893px;top:364px;width:14px;height:20px;border:1px solid #5a5a5a;border-radius:3px;background:#333"></div><div class="a" style="left:1894px;top:503px;width:0;height:0;border-top:3px solid transparent;border-bottom:3px solid transparent;border-right:4px solid #d8d8d8"></div><div class="a" style="left:904px;top:128px;width:672px;height:597px;background:#fff;overflow:hidden"><svg class="a" style="left:11px;top:8px" width="13" height="16" viewBox="0 0 12 15"><path d="M0.5 0.5 H8.5 L11.5 3 V14.5 H0.5 Z" fill="#fcd669" stroke="#e0b443" stroke-width="1"/><path d="M8.5 9 V14.5 H11.5 V9 Z" fill="#f5c451" stroke="#e0b443" stroke-width="1"/></svg><div class="a" style="left:33px;top:10px;width:1px;height:11px;background:#9a9a9a"></div><svg class="a" style="left:43px;top:7px" width="13" height="17" viewBox="0 0 13 17"><path d="M0.5 0.5 H9 L12.5 4 V16.5 H0.5 Z" fill="#fff" stroke="#8a8a8a"/><path d="M3 9 L5.5 11.5 L10 5.5" fill="none" stroke="#ec6a2c" stroke-width="1.4"/></svg><svg class="a" style="left:66px;top:8px" width="13" height="16" viewBox="0 0 12 15"><path d="M0.5 0.5 H8.5 L11.5 3 V14.5 H0.5 Z" fill="#fcd669" stroke="#e0b443" stroke-width="1"/><path d="M8.5 9 V14.5 H11.5 V9 Z" fill="#f5c451" stroke="#e0b443" stroke-width="1"/></svg><svg class="a" style="left:86px;top:11px" width="10" height="10" viewBox="0 0 10 10"><path d="M1 1.5 H9" stroke="#222" stroke-width="1.2"/><path d="M1.5 4.5 H8.5 L5 8.5 Z" fill="#222"/></svg><div class="a" style="left:102px;top:10px;width:1px;height:11px;background:#9a9a9a"></div><div class="t" style="left:110px;top:7px;font-size:13px;line-height:18px;color:#1a1a1a">OrderLog</div><div class="a" style="left:552px;top:15px;width:11px;height:1px;background:#111"></div><div class="a" style="left:597px;top:10px;width:11px;height:11px;border:1px solid #111"></div><svg class="a" style="left:642px;top:9px" width="13" height="13" viewBox="0 0 13 13"><path d="M1 1 L12 12 M12 1 L1 12" stroke="#111" stroke-width="1.1"/></svg><div class="a" style="left:1px;top:31px;width:56px;height:23px;background:#0063b1"></div><div class="t" style="left:1px;width:56px;text-align:center;top:34px;font-size:12px;line-height:19px;color:#fff">文件</div><div class="t" style="left:71px;top:34px;font-size:12px;line-height:19px;color:#222">主页</div><div class="t" style="left:124px;top:34px;font-size:12px;line-height:19px;color:#222">共享</div><div class="t" style="left:177px;top:34px;font-size:12px;line-height:19px;color:#222">查看</div><svg class="a" style="left:632px;top:40px" width="12" height="7" viewBox="0 0 12 7"><path d="M1 1 L6 6 L11 1" fill="none" stroke="#9a9a9a" stroke-width="1.1"/></svg><div class="a" style="left:652px;top:36px;width:16px;height:16px;border-radius:50%;background:#0a64c0;color:#fff;font:bold 12px/16px 'Liberation Sans';text-align:center">?</div><div class="a" style="left:0;top:57px;width:672px;height:1px;background:#dadada"></div><svg class="a" style="left:13px;top:68px" width="14" height="12" viewBox="0 0 14 12"><path d="M13 6 H2 M6.5 1.5 L2 6 L6.5 10.5" fill="none" stroke="#c8c8c8" stroke-width="1.3"/></svg><svg class="a" style="left:42px;top:68px" width="14" height="12" viewBox="0 0 14 12"><path d="M1 6 H12 M7.5 1.5 L12 6 L7.5 10.5" fill="none" stroke="#c8c8c8" stroke-width="1.3"/></svg><svg class="a" style="left:69px;top:71px" width="8" height="5" viewBox="0 0 8 5"><path d="M1 1 L4 4 L7 1" fill="none" stroke="#c8c8c8" stroke-width="1"/></svg><svg class="a" style="left:87px;top:67px" width="14" height="14" viewBox="0 0 14 14"><path d="M7 13.5 V2 M2 7 L7 1.5 L12 7" fill="none" stroke="#555" stroke-width="1.4"/></svg><div class="a" style="left:107px;top:63px;width:228px;height:23px;border:1px solid #d9d9d9"></div><svg class="a" style="left:113px;top:67px" width="12" height="15" viewBox="0 0 12 15"><path d="M0.5 0.5 H8.5 L11.5 3 V14.5 H0.5 Z" fill="#fcd669" stroke="#e0b443" stroke-width="1"/><path d="M8.5 9 V14.5 H11.5 V9 Z" fill="#f5c451" stroke="#e0b443" stroke-width="1"/></svg><div class="t" style="left:131px;top:65px;font-size:13px;line-height:18px;color:#333">«</div><div class="t" style="left:147px;top:65px;font-size:13px;line-height:18px;color:#111">Setti...</div><div class="t" style="left:189px;top:65px;font-size:13px;line-height:18px;color:#333">›</div><div class="t" style="left:204px;top:65px;font-size:13px;line-height:18px;color:#111">Orde...</div><div class="t" style="left:254px;top:65px;font-size:13px;line-height:18px;color:#333">›</div><svg class="a" style="left:305px;top:72px" width="10" height="6" viewBox="0 0 10 6"><path d="M1 1 L5 5 L9 1" fill="none" stroke="#444" stroke-width="1.2"/></svg><div class="a" style="left:318px;top:64px;width:1px;height:21px;background:#e0e0e0"></div><svg class="a" style="left:321px;top:68px" width="12" height="13" viewBox="0 0 12 13"><path d="M9.5 4 A4.5 4.5 0 1 0 10.5 7.5" fill="none" stroke="#555" stroke-width="1.3"/><path d="M7 1 L10.5 4 L7.5 6" fill="none" stroke="#555" stroke-width="1.2"/></svg><div class="a" style="left:348px;top:63px;width:311px;height:23px;border:1px solid #d9d9d9"></div><div class="t" style="left:356px;top:65px;font-size:13px;line-height:18px;color:#6d6d6d">在 OrderLog 中搜索</div><svg class="a" style="left:637px;top:67px" width="12" height="13" viewBox="0 0 12 13"><circle cx="7.5" cy="4.5" r="3.3" fill="none" stroke="#666" stroke-width="1.3"/><path d="M5 7 L1 11.5" stroke="#666" stroke-width="1.6"/></svg><svg class="a" style="left:33px;top:96px" width="16" height="16" viewBox="0 0 16 16"><path d="M8 1 L15 4 V12 L8 15 L1 12 V4 Z" fill="#54c8e0"/><path d="M1 4 L8 7 L15 4 L8 1 Z" fill="#8fe0ef"/><path d="M8 7 L15 4 V12 L8 15 Z" fill="#1da6c8"/><path d="M1 12 L8 15 L15 12 L8 10 Z" fill="#0f8fb0" opacity="0.5"/></svg><div class="t" style="left:54px;top:96px;font-size:12px;line-height:18px;color:#1a1a1a">3D 对象</div><svg class="a" style="left:34px;top:120px" width="14" height="16" viewBox="0 0 14 16"><rect x="0" y="0" width="14" height="16" fill="#3a3a3a"/><rect x="3" y="1" width="8" height="6.5" fill="#3f7fd0"/><rect x="3" y="8.5" width="8" height="6.5" fill="#3f7fd0"/><circle cx="7.5" cy="4" r="2" fill="#e8c020"/><circle cx="6" cy="12" r="2" fill="#e8c020"/><path d="M3 6 L5 5 L7 6.5 V7.5 H3Z M3 14 L6 13 L11 14 V15 H3Z" fill="#5a9a30"/><rect x="0.8" y="1.0" width="1.4" height="1.4" fill="#eee"/><rect x="11.8" y="1.0" width="1.4" height="1.4" fill="#eee"/><rect x="0.8" y="3.6" width="1.4" height="1.4" fill="#eee"/><rect x="11.8" y="3.6" width="1.4" height="1.4" fill="#eee"/><rect x="0.8" y="6.2" width="1.4" height="1.4" fill="#eee"/><rect x="11.8" y="6.2" width="1.4" height="1.4" fill="#eee"/><rect x="0.8" y="8.8" width="1.4" height="1.4" fill="#eee"/><rect x="11.8" y="8.8" width="1.4" height="1.4" fill="#eee"/><rect x="0.8" y="11.4" width="1.4" height="1.4" fill="#eee"/><rect x="11.8" y="11.4" width="1.4" height="1.4" fill="#eee"/><rect x="0.8" y="14.0" width="1.4" height="1.4" fill="#eee"/><rect x="11.8" y="14.0" width="1.4" height="1.4" fill="#eee"/></svg><div class="t" style="left:54px;top:120px;font-size:12px;line-height:18px;color:#1a1a1a">视频</div><svg class="a" style="left:33px;top:146px" width="16" height="13" viewBox="0 0 16 13"><rect x="0.5" y="0.5" width="15" height="12" fill="#fff" stroke="#9a9a9a"/><rect x="2" y="2" width="12" height="9" fill="#a9d3ef"/><path d="M2 8 Q6 5 10 7.5 L14 8.5 V11 H2 Z" fill="#3f7a5a"/><path d="M2 9.5 Q8 8.5 14 10 V11 H2Z" fill="#2a5a40"/></svg><div class="t" style="left:54px;top:144px;font-size:12px;line-height:18px;color:#1a1a1a">图片</div><svg class="a" style="left:34px;top:167px" width="14" height="17" viewBox="0 0 14 17"><path d="M0.5 0.5 H9 L13.5 5 V16.5 H0.5 Z" fill="#fff" stroke="#8a8a8a"/><path d="M9 0.5 V5 H13.5" fill="none" stroke="#8a8a8a"/><path d="M3 6 L4.5 2.5 L6 6 M3.5 5 H5.5" fill="none" stroke="#2f7fd8" stroke-width="0.9"/><path d="M6.5 5.5 H11 M2.5 8 H11 M2.5 10.5 H6 M2.5 13 H6" stroke="#2f7fd8"/><rect x="7" y="9.5" width="4" height="4" fill="#3a9a50"/></svg><div class="t" style="left:54px;top:168px;font-size:12px;line-height:18px;color:#1a1a1a">文档</div><svg class="a" style="left:33px;top:192px" width="16" height="16" viewBox="0 0 16 16"><path d="M5.5 1 H10.5 V8 H15 L8 15.5 L1 8 H5.5 Z" fill="#2f8fe0"/></svg><div class="t" style="left:54px;top:192px;font-size:12px;line-height:18px;color:#1a1a1a">下载</div><svg class="a" style="left:33px;top:216px" width="16" height="16" viewBox="0 0 16 16"><path d="M7 1 V11.5" stroke="#1e90e0" stroke-width="1.6"/><ellipse cx="4.6" cy="12.5" rx="3" ry="2.5" fill="#1e90e0"/><path d="M7 1 Q8 5 12 7 Q10 4 7.5 1Z" fill="#1e90e0"/></svg><div class="t" style="left:54px;top:216px;font-size:12px;line-height:18px;color:#1a1a1a">音乐</div><svg class="a" style="left:33px;top:241px" width="16" height="14" viewBox="0 0 16 14"><rect x="0.5" y="1.5" width="15" height="11" fill="#2a8ee4" stroke="#1a6cb8"/><rect x="0.5" y="11" width="15" height="1.5" fill="#1a5a9a"/></svg><div class="t" style="left:54px;top:240px;font-size:12px;line-height:18px;color:#1a1a1a">桌面</div><svg class="a" style="left:33px;top:264px" width="16" height="16" viewBox="0 0 16 16"><path d="M1 9 L3 6.5 H13 L15 9 V13.5 H1 Z" fill="#e6e6e6" stroke="#777" stroke-width="1"/><rect x="1" y="9" width="14" height="4.5" fill="#555"/><rect x="11" y="10.5" width="2" height="1.5" fill="#3cd03c"/><rect x="1" y="1" width="2.5" height="2.5" fill="#1e90e0"/><rect x="4.5" y="1" width="2.5" height="2.5" fill="#1e90e0"/><rect x="1" y="4" width="2.5" height="2" fill="#1e90e0"/></svg><div class="t" style="left:54px;top:264px;font-size:12px;line-height:18px;color:#1a1a1a">本地磁盘 (C:)</div><svg class="a" style="left:33px;top:288px" width="16" height="16" viewBox="0 0 16 16"><path d="M1 9 L3 6.5 H13 L15 9 V13.5 H1 Z" fill="#e6e6e6" stroke="#777" stroke-width="1"/><rect x="1" y="9" width="14" height="4.5" fill="#555"/><rect x="11" y="10.5" width="2" height="1.5" fill="#3cd03c"/></svg><div class="t" style="left:54px;top:288px;font-size:12px;line-height:18px;color:#1a1a1a">本地磁盘 (D:)</div><svg class="a" style="left:43px;top:313px" width="12" height="15" viewBox="0 0 12 15"><path d="M0.5 0.5 H8.5 L11.5 3 V14.5 H0.5 Z" fill="#fcd669" stroke="#e0b443" stroke-width="1"/><path d="M8.5 9 V14.5 H11.5 V9 Z" fill="#f5c451" stroke="#e0b443" stroke-width="1"/></svg><div class="t" style="left:62px;top:312px;font-size:13px;line-height:18px;color:#1a1a1a">c_code</div><svg class="a" style="left:43px;top:337px" width="12" height="15" viewBox="0 0 12 15"><path d="M0.5 0.5 H8.5 L11.5 3 V14.5 H0.5 Z" fill="#fcd669" stroke="#e0b443" stroke-width="1"/><path d="M8.5 9 V14.5 H11.5 V9 Z" fill="#f5c451" stroke="#e0b443" stroke-width="1"/></svg><div class="t" style="left:62px;top:336px;font-size:13px;line-height:18px;color:#1a1a1a">Downloads</div><svg class="a" style="left:43px;top:361px" width="12" height="15" viewBox="0 0 12 15"><path d="M0.5 0.5 H8.5 L11.5 3 V14.5 H0.5 Z" fill="#fcd669" stroke="#e0b443" stroke-width="1"/><path d="M8.5 9 V14.5 H11.5 V9 Z" fill="#f5c451" stroke="#e0b443" stroke-width="1"/></svg><div class="t" style="left:62px;top:360px;font-size:13px;line-height:18px;color:#1a1a1a">jzt</div><svg class="a" style="left:51px;top:385px" width="12" height="15" viewBox="0 0 12 15"><path d="M0.5 0.5 H8.5 L11.5 3 V14.5 H0.5 Z" fill="#fcd669" stroke="#e0b443" stroke-width="1"/><path d="M8.5 9 V14.5 H11.5 V9 Z" fill="#f5c451" stroke="#e0b443" stroke-width="1"/></svg><div class="t" style="left:70px;top:384px;font-size:13px;line-height:18px;color:#1a1a1a">AddinSkin</div><svg class="a" style="left:51px;top:409px" width="12" height="15" viewBox="0 0 12 15"><path d="M0.5 0.5 H8.5 L11.5 3 V14.5 H0.5 Z" fill="#fcd669" stroke="#e0b443" stroke-width="1"/><path d="M8.5 9 V14.5 H11.5 V9 Z" fill="#f5c451" stroke="#e0b443" stroke-width="1"/></svg><div class="t" style="left:70px;top:408px;font-size:13px;line-height:18px;color:#1a1a1a">AiBox</div><svg class="a" style="left:51px;top:433px" width="12" height="15" viewBox="0 0 12 15"><path d="M0.5 0.5 H8.5 L11.5 3 V14.5 H0.5 Z" fill="#fcd669" stroke="#e0b443" stroke-width="1"/><path d="M8.5 9 V14.5 H11.5 V9 Z" fill="#f5c451" stroke="#e0b443" stroke-width="1"/></svg><div class="t" style="left:70px;top:432px;font-size:13px;line-height:18px;color:#1a1a1a">Base</div><svg class="a" style="left:51px;top:457px" width="12" height="15" viewBox="0 0 12 15"><path d="M0.5 0.5 H8.5 L11.5 3 V14.5 H0.5 Z" fill="#fcd669" stroke="#e0b443" stroke-width="1"/><path d="M8.5 9 V14.5 H11.5 V9 Z" fill="#f5c451" stroke="#e0b443" stroke-width="1"/></svg><div class="t" style="left:70px;top:456px;font-size:13px;line-height:18px;color:#1a1a1a">Data</div><svg class="a" style="left:51px;top:481px" width="12" height="15" viewBox="0 0 12 15"><path d="M0.5 0.5 H8.5 L11.5 3 V14.5 H0.5 Z" fill="#fcd669" stroke="#e0b443" stroke-width="1"/><path d="M8.5 9 V14.5 H11.5 V9 Z" fill="#f5c451" stroke="#e0b443" stroke-width="1"/></svg><div class="t" style="left:70px;top:480px;font-size:13px;line-height:18px;color:#1a1a1a">Document</div><svg class="a" style="left:51px;top:505px" width="12" height="15" viewBox="0 0 12 15"><path d="M0.5 0.5 H8.5 L11.5 3 V14.5 H0.5 Z" fill="#fcd669" stroke="#e0b443" stroke-width="1"/><path d="M8.5 9 V14.5 H11.5 V9 Z" fill="#f5c451" stroke="#e0b443" stroke-width="1"/></svg><div class="t" style="left:70px;top:504px;font-size:13px;line-height:18px;color:#1a1a1a">FmlDLL</div><svg class="a" style="left:51px;top:529px" width="12" height="15" viewBox="0 0 12 15"><path d="M0.5 0.5 H8.5 L11.5 3 V14.5 H0.5 Z" fill="#fcd669" stroke="#e0b443" stroke-width="1"/><path d="M8.5 9 V14.5 H11.5 V9 Z" fill="#f5c451" stroke="#e0b443" stroke-width="1"/></svg><div class="t" style="left:70px;top:528px;font-size:13px;line-height:18px;color:#1a1a1a">Help</div><svg class="a" style="left:51px;top:553px" width="12" height="15" viewBox="0 0 12 15"><path d="M0.5 0.5 H8.5 L11.5 3 V14.5 H0.5 Z" fill="#fcd669" stroke="#e0b443" stroke-width="1"/><path d="M8.5 9 V14.5 H11.5 V9 Z" fill="#f5c451" stroke="#e0b443" stroke-width="1"/></svg><div class="t" style="left:70px;top:552px;font-size:13px;line-height:18px;color:#1a1a1a">HistoryStock</div><svg class="a" style="left:51px;top:577px" width="12" height="15" viewBox="0 0 12 15"><path d="M0.5 0.5 H8.5 L11.5 3 V14.5 H0.5 Z" fill="#fcd669" stroke="#e0b443" stroke-width="1"/><path d="M8.5 9 V14.5 H11.5 V9 Z" fill="#f5c451" stroke="#e0b443" stroke-width="1"/></svg><div class="t" style="left:70px;top:576px;font-size:13px;line-height:18px;color:#1a1a1a">NEWS</div><div class="a" style="left:237px;top:91px;width:16px;height:506px;background:#f0f0f0"></div><svg class="a" style="left:240px;top:98px" width="10" height="7" viewBox="0 0 10 7"><path d="M1 6 L5 1.5 L9 6" fill="none" stroke="#505050" stroke-width="1.4"/></svg><div class="a" style="left:238px;top:224px;width:14px;height:238px;background:#cdcdcd"></div><div class="a" style="left:254px;top:91px;width:1px;height:506px;background:#f4f4f4"></div><div class="t" style="left:274px;top:97px;font-size:12px;line-height:18px;color:#4c607a">名称</div><svg class="a" style="left:393px;top:92px" width="10" height="6" viewBox="0 0 10 6"><path d="M1 5 L5 1 L9 5" fill="none" stroke="#8a8a8a" stroke-width="1"/></svg><div class="a" style="left:529px;top:93px;width:1px;height:26px;background:#e5e5e5"></div><div class="t" style="left:535px;top:97px;font-size:12px;line-height:18px;color:#4c607a">修改日期</div><svg class="a" style="left:277px;top:129px" width="14" height="15" viewBox="0 0 14 15"><path d="M0.5 1.5 Q0.5 0.5 1.5 0.5 H9 L12.5 3.5 V14.5 H0.5 Z" fill="#fcd669" stroke="#e6b84c" stroke-width="1"/><path d="M9.5 9.5 V14.5 H12.5 V9.5 Z" fill="#f2bf47" stroke="#dcae3c" stroke-width="1"/></svg><div class="t" style="left:295px;top:128.0px;font-size:13px;line-height:18px;color:#111">AlarmDebug</div><div class="t" style="left:535px;top:128.0px;font-size:13px;line-height:18px;color:#6d6d6d">2025/9/11 11:07</div><svg class="a" style="left:277px;top:150px" width="14" height="15" viewBox="0 0 14 15"><path d="M0.5 1.5 Q0.5 0.5 1.5 0.5 H9 L12.5 3.5 V14.5 H0.5 Z" fill="#fcd669" stroke="#e6b84c" stroke-width="1"/><path d="M9.5 9.5 V14.5 H12.5 V9.5 Z" fill="#f2bf47" stroke="#dcae3c" stroke-width="1"/></svg><div class="t" style="left:295px;top:149.0px;font-size:13px;line-height:18px;color:#111">Debug</div><div class="t" style="left:535px;top:149.0px;font-size:13px;line-height:18px;color:#6d6d6d">2025/6/24 14:44</div><svg class="a" style="left:277px;top:170px" width="13" height="16" viewBox="0 0 13 16"><path d="M0.5 0.5 H8.5 L12.5 4.5 V15.5 H0.5 Z" fill="#fff" stroke="#8a8a8a" stroke-width="1"/><path d="M8.5 0.5 V4.5 H12.5" fill="none" stroke="#8a8a8a" stroke-width="1"/><path d="M2.5 5.5 H10.5 M2.5 7.5 H10.5 M2.5 9.5 H10.5 M2.5 11.5 H10.5 M2.5 13.5 H10.5" stroke="#8a8a8a" stroke-width="1"/></svg><div class="t" style="left:295px;top:170.0px;font-size:13px;line-height:18px;color:#111">ChangeReport.txt</div><div class="t" style="left:535px;top:170.0px;font-size:13px;line-height:18px;color:#6d6d6d">2025/9/17 13:46</div><svg class="a" style="left:277px;top:192px" width="13" height="16" viewBox="0 0 13 16"><path d="M0.5 0.5 H8.5 L12.5 4.5 V15.5 H0.5 Z" fill="#fff" stroke="#8a8a8a" stroke-width="1"/><path d="M8.5 0.5 V4.5 H12.5" fill="none" stroke="#8a8a8a" stroke-width="1"/><path d="M2.5 5.5 H10.5 M2.5 7.5 H10.5 M2.5 9.5 H10.5 M2.5 11.5 H10.5 M2.5 13.5 H10.5" stroke="#8a8a8a" stroke-width="1"/></svg><div class="t" style="left:295px;top:191.0px;font-size:13px;line-height:18px;color:#111">ChangeReport.txt2025-09-08 08#34#...</div><div class="t" style="left:535px;top:191.0px;font-size:13px;line-height:18px;color:#6d6d6d">2025/9/8 8:34</div><svg class="a" style="left:277px;top:212px" width="13" height="16" viewBox="0 0 13 16"><path d="M0.5 0.5 H8.5 L12.5 4.5 V15.5 H0.5 Z" fill="#fff" stroke="#8a8a8a" stroke-width="1"/><path d="M8.5 0.5 V4.5 H12.5" fill="none" stroke="#8a8a8a" stroke-width="1"/><path d="M2.5 5.5 H10.5 M2.5 7.5 H10.5 M2.5 9.5 H10.5 M2.5 11.5 H10.5 M2.5 13.5 H10.5" stroke="#8a8a8a" stroke-width="1"/></svg><div class="t" style="left:295px;top:212.0px;font-size:13px;line-height:18px;color:#111">GlobalAction.txt</div><div class="t" style="left:535px;top:212.0px;font-size:13px;line-height:18px;color:#6d6d6d">2025/9/17 15:02</div><svg class="a" style="left:277px;top:234px" width="13" height="16" viewBox="0 0 13 16"><path d="M0.5 0.5 H8.5 L12.5 4.5 V15.5 H0.5 Z" fill="#fff" stroke="#8a8a8a" stroke-width="1"/><path d="M8.5 0.5 V4.5 H12.5" fill="none" stroke="#8a8a8a" stroke-width="1"/><path d="M2.5 5.5 H10.5 M2.5 7.5 H10.5 M2.5 9.5 H10.5 M2.5 11.5 H10.5 M2.5 13.5 H10.5" stroke="#8a8a8a" stroke-width="1"/></svg><div class="t" style="left:295px;top:233.0px;font-size:13px;line-height:18px;color:#111">netgrid.txt</div><div class="t" style="left:535px;top:233.0px;font-size:13px;line-height:18px;color:#6d6d6d">2025/9/10 14:36</div><svg class="a" style="left:277px;top:254px" width="13" height="16" viewBox="0 0 13 16"><path d="M0.5 0.5 H8.5 L12.5 4.5 V15.5 H0.5 Z" fill="#fff" stroke="#8a8a8a" stroke-width="1"/><path d="M8.5 0.5 V4.5 H12.5" fill="none" stroke="#8a8a8a" stroke-width="1"/><path d="M2.5 5.5 H10.5 M2.5 7.5 H10.5 M2.5 9.5 H10.5 M2.5 11.5 H10.5 M2.5 13.5 H10.5" stroke="#8a8a8a" stroke-width="1"/></svg><div class="t" style="left:295px;top:254.0px;font-size:13px;line-height:18px;color:#111">PleaceOrder.txt</div><div class="t" style="left:535px;top:254.0px;font-size:13px;line-height:18px;color:#6d6d6d">2025/9/17 15:07</div><svg class="a" style="left:277px;top:276px" width="13" height="16" viewBox="0 0 13 16"><path d="M0.5 0.5 H8.5 L12.5 4.5 V15.5 H0.5 Z" fill="#fff" stroke="#8a8a8a" stroke-width="1"/><path d="M8.5 0.5 V4.5 H12.5" fill="none" stroke="#8a8a8a" stroke-width="1"/><path d="M2.5 5.5 H10.5 M2.5 7.5 H10.5 M2.5 9.5 H10.5 M2.5 11.5 H10.5 M2.5 13.5 H10.5" stroke="#8a8a8a" stroke-width="1"/></svg><div class="t" style="left:295px;top:275.0px;font-size:13px;line-height:18px;color:#111">PleaceOrder.txt2025-09-10 14#32#21...</div><div class="t" style="left:535px;top:275.0px;font-size:13px;line-height:18px;color:#6d6d6d">2025/9/10 14:32</div></div><svg class="a" style="left:0;top:0" width="1905" height="725"><path d="M122.9 241.3 L195.4 47.4 L198.6 51.8 L197.0 31.0 L182.6 46.0 L187.9 44.7 L121.1 240.7 Z" fill="#ee4a3c"/><path d="M1090.5 442.9 L1166.8 399.8 L1167.3 406.5 L1179.0 389.0 L1158.1 391.0 L1163.7 394.6 L1089.5 441.1 Z" fill="#ee4a3c"/></svg></body></html>
